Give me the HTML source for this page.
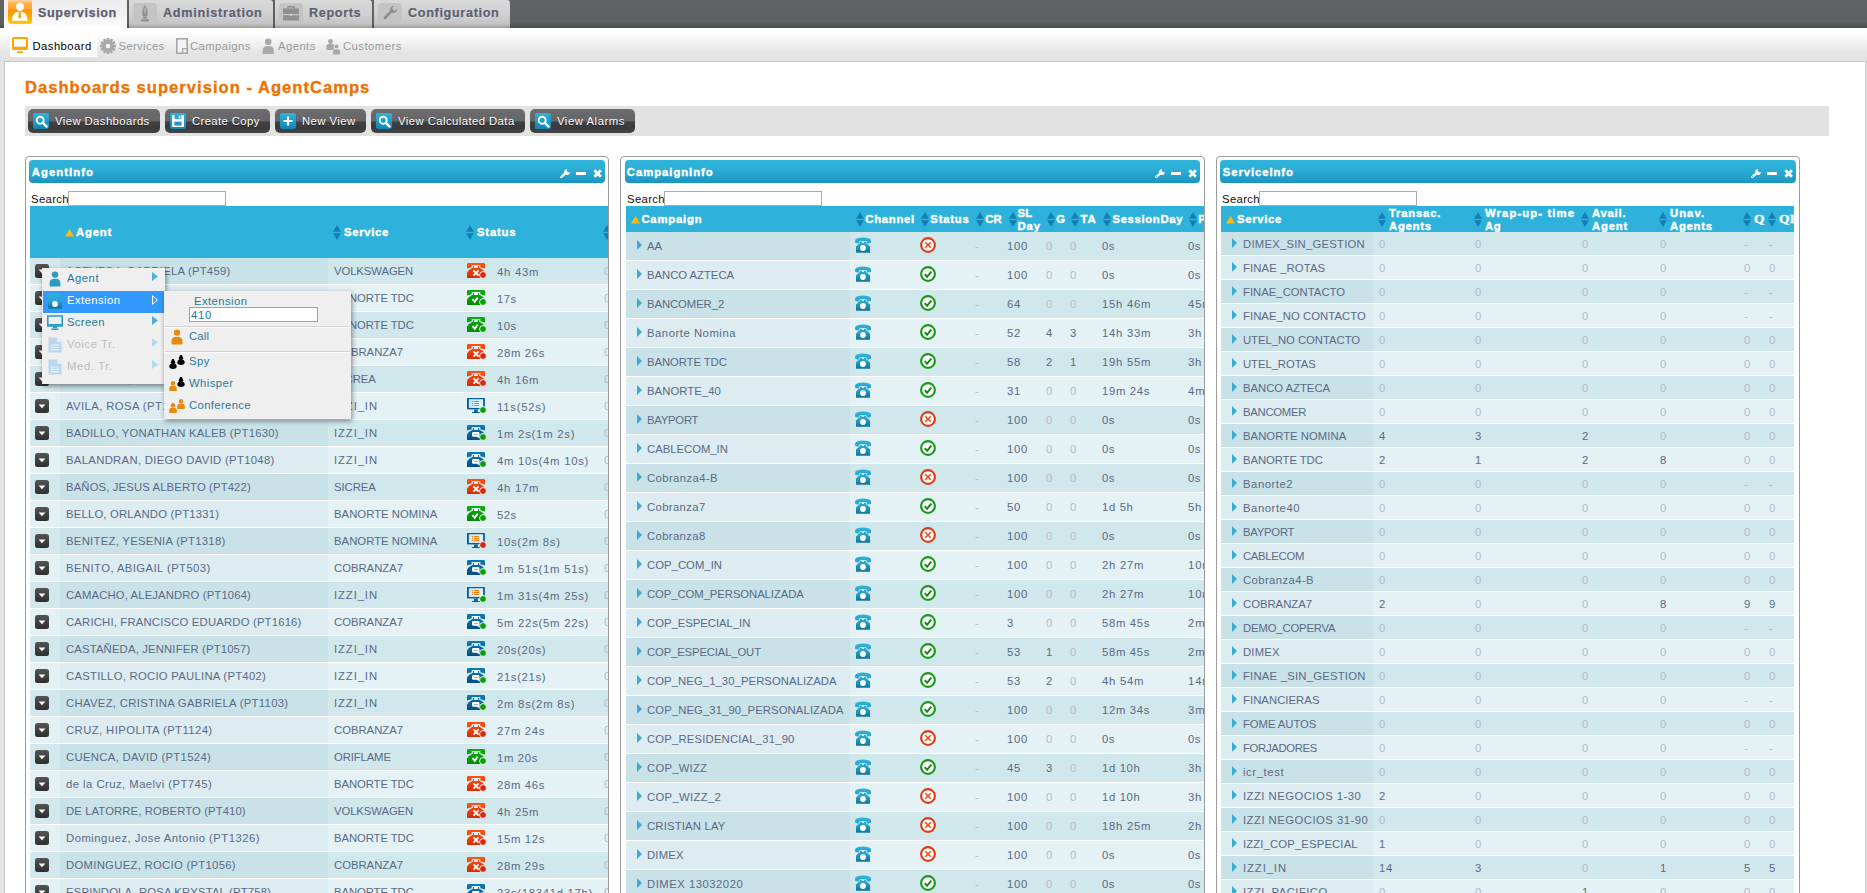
<!DOCTYPE html>
<html><head><meta charset="utf-8"><title>Dashboards supervision - AgentCamps</title>
<style>
*{box-sizing:border-box;margin:0;padding:0}
html,body{width:1867px;height:893px;overflow:hidden;background:#e3e3e3}
body{font-family:"Liberation Sans",sans-serif;font-size:11.5px;color:#5a6a86;position:relative}
svg{display:block;overflow:visible}
.abs{position:absolute}
/* top bar */
#top{position:absolute;left:0;top:0;width:1867px;height:28px;background:linear-gradient(#616266 0,#5f6064 80%,#4a4b4f 100%)}
.tab{position:absolute;top:0;height:28px;border-radius:0 3px 0 0;background:linear-gradient(#d9d9d9 0,#cfcfcf 55%,#c4c4c4 85%,#9c9c9c 100%);}
.tab.sel{background:linear-gradient(#ededee 0,#f1f1f2 55%,#ffffff 100%);border-radius:0}
.tt{position:absolute;-webkit-text-stroke:.25px #5b6072;font-weight:bold;font-size:12.6px;line-height:15px;color:#5b6072;white-space:nowrap;text-shadow:0 1px 0 rgba(255,255,255,.6)}
.tab .ic{position:absolute;top:3px;width:24px;height:21px;border-radius:4px;background:#c4c4c4}
/* sub nav */
#sub{position:absolute;left:0;top:28px;width:1867px;height:34px;background:linear-gradient(#ffffff 0,#fdfdfd 18%,#eeeeee 52%,#e4e4e4 74%,#e2e2e2 100%)}
.it{position:absolute;font-size:11.3px;color:#9a9a9a;white-space:nowrap;line-height:13px}
#sub .sel{position:absolute;left:10px;top:2px;width:87px;height:27px;background:#fff}
/* content */
#content{position:absolute;left:4px;top:61px;width:1862px;height:840px;background:#fff;border:1px solid #c9c9c9}
.h1{position:absolute;-webkit-text-stroke:.35px #ee7203;font-size:16.6px;font-weight:bold;color:#ee7203;white-space:nowrap;line-height:20px}
#toolbar{position:absolute;left:25px;top:106px;width:1804px;height:30px;background:#e2e2e2}
.btn{position:absolute;top:109px;height:24px;border-radius:5px;background:linear-gradient(#6c6c6e 0,#666668 48%,#404042 56%,#3b3b3d 80%,#454547 100%);color:#fff;white-space:nowrap}
.btn .bi{position:absolute;left:5px;top:4px;width:16px;height:16px;border-radius:2px;background:linear-gradient(#2eb3dc 0,#1e9ac6 55%,#1585b0 100%)}
.bt{position:absolute;font-size:11.3px;line-height:13px;color:#fff;white-space:nowrap;text-shadow:0 1px 0 #222}
/* panels */
.panel{position:absolute;top:156px;height:760px;border:1px solid #9c9c9c;border-radius:4px;background:#fff;overflow:hidden}
.ph{position:absolute;left:3px;top:3px;height:23px;border-radius:4px;background:linear-gradient(#2eb3db 0,#2cb0d8 35%,#1f9cc6 85%,#1a94bd 100%)}
.t{position:absolute;-webkit-text-stroke:.4px #fff;font-weight:bold;font-size:11.3px;color:#fff;line-height:13px;white-space:nowrap}
.sl{position:absolute;color:#111;font-size:11.3px;line-height:13px;white-space:nowrap}
.si{position:absolute;top:34px;width:158px;height:15px;border:1px solid #a9adb3;background:#fff}
.tbl{position:absolute;left:4px;top:49px}
.thd{position:absolute;left:0;top:0;background:#2eb2db;}
.th{position:absolute;color:#fff;-webkit-text-stroke:.4px #fff;font-weight:bold;font-size:11.3px;line-height:13px;white-space:nowrap}
.row{position:absolute;left:0}
.c{position:absolute;top:0;height:100%}
.tx{position:absolute;white-space:nowrap;font-size:11.3px;line-height:13px;color:#5a6a86}
.g{color:#b9b8c4}
.o .c{background:#d0e7ec}.o .s{background:#c9e2e8}
.e .c{background:#e4f1f5}.e .s{background:#dcecf1}
.o .f{background:#d3e8ed}.e .f{background:#e3f1f5}
/* menus */
.menu{position:absolute;background:#efefef;box-shadow:1px 2px 5px rgba(0,0,0,.45);}
.mi{position:absolute;left:1px;height:22px;white-space:nowrap}
.mt{position:absolute;font-size:11.3px;line-height:13px;color:#1f7a9c;white-space:nowrap}
.mi.dis .mt{color:#bcbcbc}
.mi.hl{background:#3399ff}.mi.hl .mt{color:#fff}
.sep{position:absolute;left:1px;height:2px;border-top:1px solid #d4d4d4;border-bottom:1px solid #fafafa}
</style></head>
<body>

<svg width="0" height="0" style="position:absolute">
<defs>
<linearGradient id="gR" gradientUnits="userSpaceOnUse" x1="0" y1="0" x2="0" y2="15"><stop offset="0" stop-color="#ff5210"/><stop offset="1" stop-color="#d42c08"/></linearGradient>
<linearGradient id="gG" gradientUnits="userSpaceOnUse" x1="0" y1="0" x2="0" y2="15"><stop offset="0" stop-color="#0bae0b"/><stop offset="1" stop-color="#068806"/></linearGradient>
<linearGradient id="gB" gradientUnits="userSpaceOnUse" x1="0" y1="0" x2="0" y2="15"><stop offset="0" stop-color="#0c7cb6"/><stop offset="1" stop-color="#064c82"/></linearGradient>
<linearGradient id="gT" gradientUnits="userSpaceOnUse" x1="0" y1="0" x2="0" y2="16"><stop offset="0" stop-color="#2eb2da"/><stop offset=".45" stop-color="#28a6ce"/><stop offset="1" stop-color="#10739a"/></linearGradient>
<linearGradient id="gO" x1="0" y1="0" x2="0" y2="1"><stop offset=".1" stop-color="#ffe2c0"/><stop offset=".28" stop-color="#ffad48"/><stop offset=".46" stop-color="#ffa733"/><stop offset=".48" stop-color="#ff9800"/><stop offset=".7" stop-color="#ffa400"/><stop offset=".97" stop-color="#ffc800"/></linearGradient>
<linearGradient id="gK" x1="0" y1="0" x2="0" y2="1"><stop offset="0" stop-color="#555"/><stop offset="1" stop-color="#2e2e2e"/></linearGradient>
<linearGradient id="gScr" x1="0" y1="0" x2="1" y2="1"><stop offset="0" stop-color="#bfe6fa"/><stop offset="1" stop-color="#eaf7ff"/></linearGradient>

<!-- phone body w/ handset -->
<symbol id="ph" viewBox="0 0 18 15.2">
<path d="M0 1.3 Q0 0 1.3 0 H16.7 Q18 0 18 1.3 V5.5 L13.3 4.2 V2.1 H4.7 V4.2 L0 5.5 Z"/>
<path d="M5.9 3.1 H7 V5 H5.9 Z M11 3.1 H12.1 V5 H11 Z"/>
<path d="M5.2 4.9 H12.9 Q16.6 6.4 17.9 9.6 V15.1 H0 V9.6 Q1.4 6.4 5.2 4.9 Z"/>
</symbol>
<symbol id="dotR" viewBox="0 0 8 8"><circle cx="4" cy="4" r="3.45" fill="#d42a0c" stroke="#fff" stroke-width=".9"/></symbol>
<symbol id="dotG" viewBox="0 0 8 8"><circle cx="4" cy="4" r="3.45" fill="#06a006" stroke="#fff" stroke-width=".9"/></symbol>
<symbol id="dotGw" viewBox="0 0 8 8"><circle cx="4" cy="4" r="3.45" fill="#06a006" stroke="#fff" stroke-width=".9"/></symbol>

<symbol id="sRed" viewBox="0 0 20 16">
<use href="#ph" x="0" y="0" width="18" height="15.2" fill="url(#gR)"/>
<path d="M6.5 7.4 L11.6 12.7 M11.6 7.4 L6.5 12.7" stroke="#fff" stroke-width="1.8" fill="none"/>
<use href="#dotR" x="12" y="8" width="8" height="8"/>
</symbol>
<symbol id="sGreen" viewBox="0 0 20 16">
<use href="#ph" x="0" y="0" width="18" height="15.2" fill="url(#gG)"/>
<path d="M5.5 9 L7.7 11.8 L10.7 7.6" stroke="#fff" stroke-width="1.9" fill="none"/>
<use href="#dotGw" x="12" y="8" width="8" height="8"/>
</symbol>
<symbol id="sBlue" viewBox="0 0 20 16">
<use href="#ph" x="0" y="0" width="18" height="15.2" fill="url(#gB)"/>
<path d="M6.4 7.1 H11.2 Q12.5 7.1 12.5 8.4 V10.4 Q12.5 11.7 11.7 11.7 L11.6 13.6 L10 11.7 H6.4 Q5 11.7 5 10.4 V8.4 Q5 7.1 6.4 7.1 Z" fill="#fff"/>
<path d="M7.1 9.5 H11" stroke="#86b4d2" stroke-width="1"/>
<use href="#dotG" x="12" y="8" width="8" height="8"/>
</symbol>
<symbol id="mon" viewBox="0 0 20 16">
<path d="M0 0 H17.9 V11.4 H0 Z" fill="#07609a"/>
<path d="M1.9 1.2 H16.1 V9.9 H1.9 Z" fill="url(#gScr)"/>
<path d="M7.1 11.4 H10.7 V14 H12.8 V15.1 H5 V14 H7.1 Z" fill="#07609a"/>
<path d="M4.9 3.5 H6.1 M4.9 5.5 H6.1 M4.9 7.5 H6.1" stroke="#ff7a0a" stroke-width="1.1"/>
<path d="M7.1 3.5 H12 M7.1 5.5 H12 M7.1 7.5 H12" stroke="#ff7a0a" stroke-width="1.1"/>
</symbol>
<symbol id="sMonG" viewBox="0 0 20 16"><use href="#mon" width="20" height="16"/><use href="#dotG" x="12" y="8" width="8" height="8"/></symbol>
<symbol id="sMonR" viewBox="0 0 20 16"><use href="#mon" width="20" height="16"/><use href="#dotR" x="12" y="8" width="8" height="8"/></symbol>

<!-- teal campaign phone 16x16 -->
<symbol id="tph" viewBox="0 0 16 16">
<path d="M0.1 3.4 Q0.3 2 2 1.5 Q8 -0.5 14 1.5 Q15.8 2 16 3.4 V5.7 L12.5 6.7 L11.6 4.5 Q8 3.3 4.4 4.5 L3.5 6.7 L0.1 5.7 Z" fill="url(#gT)"/>
<path d="M4.9 5 H6.9 V5.9 H9 V5 H11 V5.9 L15.1 9.4 V15.8 H1 V9.4 L4.9 5.9 Z" fill="url(#gT)"/>
<circle cx="7.96" cy="11" r="2.9" fill="#fff"/>
</symbol>
<symbol id="cX" viewBox="0 0 16 16">
<circle cx="8" cy="8" r="6.9" fill="#fff" stroke="#e03a12" stroke-width="2.1"/>
<path d="M5.2 5.2 L10.8 10.8 M10.8 5.2 L5.2 10.8" stroke="#ee4a1a" stroke-width="1.6"/>
</symbol>
<symbol id="cOk" viewBox="0 0 16 16">
<circle cx="8" cy="8" r="6.9" fill="#fff" stroke="#169a16" stroke-width="2.1"/>
<path d="M4.8 8.2 L7.1 10.8 L11.3 5.6" stroke="#118811" stroke-width="2" fill="none"/>
</symbol>
<!-- sort icons -->
<symbol id="sAsc" viewBox="0 0 9 8"><path d="M0 7.6 L4.5 0 L9 7.6 Z" fill="#fdb913"/></symbol>
<symbol id="sBoth" viewBox="0 0 8 15"><path d="M0 6.8 L4 0 L8 6.8 Z M0 8.2 L4 15 L8 8.2 Z" fill="#137fb6"/></symbol>
<!-- expand arrow -->
<symbol id="ex" viewBox="0 0 5 10"><path d="M0 0 L5 5 L0 10 Z" fill="#36acd6"/></symbol>
<!-- row button -->
<symbol id="rb" viewBox="0 0 14 14"><rect x="0" y="0" width="14" height="14" rx="2.5" fill="url(#gK)"/><path d="M3.6 5.6 H10.4 L7 9.2 Z" fill="#fff"/></symbol>
<!-- header tools -->
<symbol id="wr" viewBox="0 0 10 9"><path d="M1.4 7.6 L6.2 3.4" stroke="#fff" stroke-width="2.5" stroke-linecap="round"/><path d="M7.24 0.1 A2.8 2.8 0 1 0 9.8 2.66 L8.3 3.3 L6.7 1.8 Z" fill="#fff"/><circle cx="1.5" cy="7.5" r=".55" fill="#24a2cc"/></symbol>
<symbol id="mn" viewBox="0 0 10 3"><rect width="10" height="3" fill="#fff"/></symbol>
<symbol id="xx" viewBox="0 0 10 10"><path d="M1.4 1.4 L8.6 8.6 M8.6 1.4 L1.4 8.6" stroke="#fff" stroke-width="3.1"/></symbol>
<!-- persons -->
<symbol id="per" viewBox="0 0 12 16"><circle cx="6" cy="3.6" r="3.2"/><path d="M0.6 15.6 V12 Q0.6 7.8 6 7.8 Q11.4 7.8 11.4 12 V15.6 Z"/></symbol>
<symbol id="spy1" viewBox="0 0 8 10"><rect x="2.9" y="0" width="2.2" height="4"/><circle cx="4" cy="3.2" r="2.2"/><path d="M0.3 7.6 Q0.3 4.6 4 4.6 Q7.7 4.6 7.7 7.6 Q7.7 10 4 10 Q0.3 10 0.3 7.6 Z"/></symbol>
<symbol id="psm" viewBox="0 0 8 10"><circle cx="4" cy="2.3" r="2.2"/><path d="M0.2 9.8 V7.4 Q0.2 4.4 4 4.4 Q7.8 4.4 7.8 7.4 V9.8 Q4 10.6 .2 9.8 Z"/></symbol>
<!-- doc icon -->
<symbol id="doc" viewBox="0 0 14 16"><path d="M0.5 0.5 H9 L13.5 5 V15.5 H0.5 Z" fill="#b9d6ee"/><path d="M9 .5 V5 H13.5 Z" fill="#dfeefa"/><path d="M3 8 H11 M3 10.3 H11 M3 12.6 H11" stroke="#e8f3fb" stroke-width="1.2"/></symbol>
<!-- teal monitor for menu -->
<symbol id="tmon" viewBox="0 0 16 16"><path d="M0.8 1 H15.2 V11 H0.8 Z" fill="none" stroke="#2a9cc4" stroke-width="1.6"/><path d="M1.6 9 H14.4 V10.6 H1.6 Z" fill="#2a9cc4"/><path d="M6 11 H10 V13 H6 Z" fill="#2a9cc4"/><path d="M4.6 13.4 H11.4 V15 H4.6 Z" fill="#2a9cc4"/></symbol>
<symbol id="omon" viewBox="0 0 16 17"><rect x="0" y="0" width="16" height="12.9" rx="1.7" fill="#ffa200"/><rect x="2" y="2" width="12" height="7.7" fill="#fff"/><rect x="5" y="14.2" width="5.9" height="1.7" rx=".6" fill="#ffa200"/></symbol>
<symbol id="marr" viewBox="0 0 6 9"><path d="M0 0 L6 4.5 L0 9 Z"/></symbol>
</defs>
</svg>

<div id="top">
<div class="tab sel" style="left:4px;width:123px"><svg class="abs" style="left:4px;top:-1px" width="24" height="25" viewBox="0 0 24 25"><rect x="0" y="-3" width="24" height="28" rx="4" fill="url(#gO)"/><circle cx="12" cy="7.7" r="3.95" fill="#fff"/><path d="M4.1 21.8 Q4.1 12.6 11.8 12.6 Q19.4 12.6 19.4 21.8 Z" fill="#fff"/><path d="M11 12.7 H12.6 L13.4 17.8 L11.8 20.2 L10.2 17.8 Z" fill="#ffa010"/></svg><div class="tt" style="left:34px;top:6px;letter-spacing:0.619px;">Supervision</div></div>
<div class="tab" style="left:129px;width:144px"><div class="ic" style="left:4px"></div><svg class="abs" style="left:10px;top:5px" width="12" height="17" viewBox="0 0 12 17"><path d="M6 0 Q9.6 5 8.4 11 H3.6 Q2.4 5 6 0 Z" fill="#8f8f8f"/><path d="M6 2.5 V8.5" stroke="#c4c4c4" stroke-width="1"/><path d="M4 11.6 H8 V13.6 H4 Z M2.2 14.2 H9.8 V16.4 H2.2 Z" fill="#8f8f8f"/></svg><div class="tt" style="left:34px;top:6px;letter-spacing:0.766px;">Administration</div></div>
<div class="tab" style="left:275px;width:97px"><div class="ic" style="left:4px"></div><svg class="abs" style="left:8px;top:6px" width="16" height="15" viewBox="0 0 16 15"><path d="M5 2.6 V.8 H11 V2.6" fill="none" stroke="#8f8f8f" stroke-width="1.5"/><path d="M0 2.6 H16 V8 H0 Z M0 9.2 H16 V14.6 H0 Z" fill="#8f8f8f"/><rect x="7" y="7.6" width="2" height="2.4" fill="#c8c8c8"/></svg><div class="tt" style="left:34px;top:6px;letter-spacing:0.669px;">Reports</div></div>
<div class="tab" style="left:374px;width:136px"><div class="ic" style="left:4px"></div><svg class="abs" style="left:9px;top:5px" width="15" height="16" viewBox="0 0 11 11"><path d="M10.4 2.6 A3 3 0 0 1 6.4 5.4 L2 9.9 A1 1 0 0 1 0.6 8.5 L5.1 4.1 A3 3 0 0 1 8 .2 L6.6 2.2 L8.3 3.9 Z" fill="#8f8f8f"/></svg><div class="tt" style="left:34px;top:6px;letter-spacing:0.686px;">Configuration</div></div>
</div>
<div id="sub"><div class="sel"></div>
<svg class="abs" style="left:12px;top:9px" width="16" height="17"><use href="#omon" width="16" height="17"/></svg>
<div class="it" style="left:32.5px;top:12px;letter-spacing:0.435px;color:#000">Dashboard</div>
<svg class="abs" style="left:100px;top:10px" width="16" height="16" viewBox="0 0 16 16"><g fill="#a9a9a9"><circle cx="8" cy="8" r="5.8"/><rect x="6.6" y="0" width="2.8" height="16" rx=".6" transform="rotate(0 8 8)"/><rect x="6.6" y="0" width="2.8" height="16" rx=".6" transform="rotate(30 8 8)"/><rect x="6.6" y="0" width="2.8" height="16" rx=".6" transform="rotate(60 8 8)"/><rect x="6.6" y="0" width="2.8" height="16" rx=".6" transform="rotate(90 8 8)"/><rect x="6.6" y="0" width="2.8" height="16" rx=".6" transform="rotate(120 8 8)"/><rect x="6.6" y="0" width="2.8" height="16" rx=".6" transform="rotate(150 8 8)"/></g><circle cx="8" cy="8" r="2.3" fill="#f3f3f3"/></svg>
<div class="it" style="left:118.5px;top:12px;letter-spacing:0.345px;">Services</div>
<svg class="abs" style="left:176px;top:10px" width="12" height="16" viewBox="0 0 12 16"><rect x=".8" y=".8" width="10.4" height="14.4" fill="#f4f4f4" stroke="#a6a6a6" stroke-width="1.6"/><path d="M6.6 14.6 V10.6 H11.2" fill="none" stroke="#a6a6a6" stroke-width="1.4"/></svg>
<div class="it" style="left:190px;top:12px;letter-spacing:0.395px;">Campaigns</div>
<svg class="abs" style="left:261.5px;top:9.5px" width="12.5" height="16.5" fill="#a9a9a9"><use href="#per" width="12.5" height="16.5"/></svg>
<div class="it" style="left:278px;top:12px;letter-spacing:0.433px;">Agents</div>
<svg class="abs" style="left:326px;top:11px" width="9" height="11" fill="#a9a9a9"><use href="#psm" width="9" height="11"/></svg>
<svg class="abs" style="left:332px;top:15.5px" width="9" height="11" fill="#a9a9a9" stroke="#f0f0f0" stroke-width=".8"><use href="#psm" width="9" height="11"/></svg>
<div class="it" style="left:343px;top:12px;letter-spacing:0.461px;">Customers</div>
</div>
<div id="content"></div>
<div class="h1" style="left:25px;top:77.6px;letter-spacing:1.006px;">Dashboards supervision - AgentCamps</div>
<div id="toolbar"></div>
<div class="btn" style="left:28px;width:132px"><div class="bi"><svg class="abs" style="left:2px;top:2px" width="13" height="13" viewBox="0 0 13 13"><circle cx="5.2" cy="5.2" r="3.5" fill="none" stroke="#fff" stroke-width="1.9"/><path d="M7.9 7.9 L11.6 11.6" stroke="#fff" stroke-width="2.3" stroke-linecap="round"/></svg></div><div class="bt" style="left:27px;top:5.8px;letter-spacing:0.423px;">View Dashboards</div></div>
<div class="btn" style="left:165px;width:105px"><div class="bi"><svg class="abs" style="left:2px;top:2px" width="12" height="12" viewBox="0 0 12 12"><path d="M0 1 Q0 0 1 0 H11 Q12 0 12 1 V11 Q12 12 11 12 H1 Q0 12 0 11 Z" fill="#fff"/><rect x="2.6" y="0" width="6.8" height="4" fill="#2aa5d0"/><rect x="6.6" y=".6" width="1.8" height="2.8" fill="#fff"/><rect x="2.4" y="6.6" width="7.2" height="4" fill="#2596c0"/></svg></div><div class="bt" style="left:27px;top:5.8px;letter-spacing:0.387px;">Create Copy</div></div>
<div class="btn" style="left:275px;width:91px"><div class="bi"><svg class="abs" style="left:3px;top:3px" width="10" height="10" viewBox="0 0 10 10"><path d="M5 .5 V9.5 M.5 5 H9.5" stroke="#fff" stroke-width="2.2"/></svg></div><div class="bt" style="left:27px;top:5.8px;letter-spacing:0.431px;">New View</div></div>
<div class="btn" style="left:371px;width:154px"><div class="bi"><svg class="abs" style="left:2px;top:2px" width="13" height="13" viewBox="0 0 13 13"><circle cx="5.2" cy="5.2" r="3.5" fill="none" stroke="#fff" stroke-width="1.9"/><path d="M7.9 7.9 L11.6 11.6" stroke="#fff" stroke-width="2.3" stroke-linecap="round"/></svg></div><div class="bt" style="left:27px;top:5.8px;letter-spacing:0.442px;">View Calculated Data</div></div>
<div class="btn" style="left:530px;width:105px"><div class="bi"><svg class="abs" style="left:2px;top:2px" width="13" height="13" viewBox="0 0 13 13"><circle cx="5.2" cy="5.2" r="3.5" fill="none" stroke="#fff" stroke-width="1.9"/><path d="M7.9 7.9 L11.6 11.6" stroke="#fff" stroke-width="2.3" stroke-linecap="round"/></svg></div><div class="bt" style="left:27px;top:5.8px;letter-spacing:0.541px;">View Alarms</div></div>
<div class="panel" style="left:25px;width:584px">
<div class="ph" style="left:3px;width:576px"><div class="t" style="left:2.8px;top:5.5px;letter-spacing:1.043px;">AgentInfo</div><svg class="abs" style="left:531px;top:9px" width="10" height="9.5"><use href="#wr" width="10" height="9.5"/></svg><svg class="abs" style="left:547px;top:12px" width="10" height="3"><use href="#mn" width="10" height="3"/></svg><svg class="abs" style="left:563.7px;top:9.2px" width="9.3" height="9"><use href="#xx" width="9.3" height="9"/></svg></div>
<div class="sl" style="left:5px;top:36px;letter-spacing:0.349px;">Search</div>
<div class="si" style="left:42px;width:158px"></div>
<div class="tbl">
<div class="thd" style="width:600px;height:52px">
<svg class="abs" style="left:35px;top:22.5px" width="9" height="8"><use href="#sAsc" width="9" height="8"/></svg><div class="th" style="left:46px;top:19.7px;letter-spacing:0.836px;">Agent</div>
<svg class="abs" style="left:303.3px;top:18.8px" width="8" height="15"><use href="#sBoth" width="8" height="15"/></svg><div class="th" style="left:314px;top:19.7px;letter-spacing:0.691px;">Service</div>
<svg class="abs" style="left:436.3px;top:18.8px" width="8" height="15"><use href="#sBoth" width="8" height="15"/></svg><div class="th" style="left:447px;top:19.7px;letter-spacing:0.803px;">Status</div>
<svg class="abs" style="left:573.3px;top:18.8px" width="8" height="15"><use href="#sBoth" width="8" height="15"/></svg>
</div>
<div class="row o" style="top:52px;width:600px;height:26px"><div class="c f" style="left:0;width:30px"></div><div class="c s" style="left:30px;width:268px"></div><div class="c" style="left:298px;width:302px"></div><svg class="abs" style="left:5px;top:6px" width="14" height="14"><use href="#rb" width="14" height="14"/></svg><div class="tx" style="left:36px;top:6.5px;letter-spacing:0.239px;">ACEVES I, GABRIELA (PT459)</div><div class="tx" style="left:304px;top:6.5px;letter-spacing:-0.077px;">VOLKSWAGEN</div><svg class="abs" style="left:437px;top:5px" width="20" height="16"><use href="#sRed" width="20" height="16"/></svg><div class="tx" style="left:467px;top:7.5px;letter-spacing:0.771px;">4h 43m</div><div class="tx g" style="left:574px;top:6.5px;letter-spacing:0.664px;">0</div></div>
<div class="row e" style="top:79px;width:600px;height:26px"><div class="c f" style="left:0;width:30px"></div><div class="c s" style="left:30px;width:268px"></div><div class="c" style="left:298px;width:302px"></div><svg class="abs" style="left:5px;top:6px" width="14" height="14"><use href="#rb" width="14" height="14"/></svg><div class="tx" style="left:36px;top:6.5px;letter-spacing:0.236px;">AGUILAR, MARIA FERNANDA (PT1209)</div><div class="tx" style="left:304px;top:6.5px;letter-spacing:-0.075px;">BANORTE TDC</div><svg class="abs" style="left:437px;top:5px" width="20" height="16"><use href="#sGreen" width="20" height="16"/></svg><div class="tx" style="left:467px;top:7.5px;letter-spacing:0.469px;">17s</div><div class="tx g" style="left:574px;top:6.5px;letter-spacing:0.664px;">0</div></div>
<div class="row o" style="top:106px;width:600px;height:26px"><div class="c f" style="left:0;width:30px"></div><div class="c s" style="left:30px;width:268px"></div><div class="c" style="left:298px;width:302px"></div><svg class="abs" style="left:5px;top:6px" width="14" height="14"><use href="#rb" width="14" height="14"/></svg><div class="tx" style="left:36px;top:6.5px;letter-spacing:0.237px;">ALCANTARA, LUIS ENRIQUE (PT1187)</div><div class="tx" style="left:304px;top:6.5px;letter-spacing:-0.075px;">BANORTE TDC</div><svg class="abs" style="left:437px;top:5px" width="20" height="16"><use href="#sGreen" width="20" height="16"/></svg><div class="tx" style="left:467px;top:7.5px;letter-spacing:0.469px;">10s</div><div class="tx g" style="left:574px;top:6.5px;letter-spacing:0.664px;">0</div></div>
<div class="row e" style="top:133px;width:600px;height:26px"><div class="c f" style="left:0;width:30px"></div><div class="c s" style="left:30px;width:268px"></div><div class="c" style="left:298px;width:302px"></div><svg class="abs" style="left:5px;top:6px" width="14" height="14"><use href="#rb" width="14" height="14"/></svg><div class="tx" style="left:36px;top:6.5px;letter-spacing:0.263px;">ALVAREZ, KARLA IVONNE (PT977)</div><div class="tx" style="left:304px;top:6.5px;letter-spacing:-0.008px;">COBRANZA7</div><svg class="abs" style="left:437px;top:5px" width="20" height="16"><use href="#sRed" width="20" height="16"/></svg><div class="tx" style="left:467px;top:7.5px;letter-spacing:0.672px;">28m 26s</div><div class="tx g" style="left:574px;top:6.5px;letter-spacing:0.664px;">0</div></div>
<div class="row o" style="top:160px;width:600px;height:26px"><div class="c f" style="left:0;width:30px"></div><div class="c s" style="left:30px;width:268px"></div><div class="c" style="left:298px;width:302px"></div><svg class="abs" style="left:5px;top:6px" width="14" height="14"><use href="#rb" width="14" height="14"/></svg><div class="tx" style="left:36px;top:6.5px;letter-spacing:0.21px;">ARELLANO, MONICA (PT631)</div><div class="tx" style="left:304px;top:6.5px;letter-spacing:-0.053px;">SICREA</div><svg class="abs" style="left:437px;top:5px" width="20" height="16"><use href="#sRed" width="20" height="16"/></svg><div class="tx" style="left:467px;top:7.5px;letter-spacing:0.771px;">4h 16m</div><div class="tx g" style="left:574px;top:6.5px;letter-spacing:0.664px;">0</div></div>
<div class="row e" style="top:187px;width:600px;height:26px"><div class="c f" style="left:0;width:30px"></div><div class="c s" style="left:30px;width:268px"></div><div class="c" style="left:298px;width:302px"></div><svg class="abs" style="left:5px;top:6px" width="14" height="14"><use href="#rb" width="14" height="14"/></svg><div class="tx" style="left:36px;top:6.5px;letter-spacing:0.404px;">AVILA, ROSA (PT1412)</div><div class="tx" style="left:304px;top:6.5px;letter-spacing:0.899px;">IZZI_IN</div><svg class="abs" style="left:437px;top:5px" width="20" height="16"><use href="#sMonG" width="20" height="16"/></svg><div class="tx" style="left:467px;top:7.5px;letter-spacing:0.758px;">11s(52s)</div><div class="tx g" style="left:574px;top:6.5px;letter-spacing:0.664px;">0</div></div>
<div class="row o" style="top:214px;width:600px;height:26px"><div class="c f" style="left:0;width:30px"></div><div class="c s" style="left:30px;width:268px"></div><div class="c" style="left:298px;width:302px"></div><svg class="abs" style="left:5px;top:6px" width="14" height="14"><use href="#rb" width="14" height="14"/></svg><div class="tx" style="left:36px;top:6.5px;letter-spacing:0.226px;">BADILLO, YONATHAN KALEB (PT1630)</div><div class="tx" style="left:304px;top:6.5px;letter-spacing:0.899px;">IZZI_IN</div><svg class="abs" style="left:437px;top:5px" width="20" height="16"><use href="#sBlue" width="20" height="16"/></svg><div class="tx" style="left:467px;top:7.5px;letter-spacing:0.761px;">1m 2s(1m 2s)</div><div class="tx g" style="left:574px;top:6.5px;letter-spacing:0.664px;">0</div></div>
<div class="row e" style="top:241px;width:600px;height:26px"><div class="c f" style="left:0;width:30px"></div><div class="c s" style="left:30px;width:268px"></div><div class="c" style="left:298px;width:302px"></div><svg class="abs" style="left:5px;top:6px" width="14" height="14"><use href="#rb" width="14" height="14"/></svg><div class="tx" style="left:36px;top:6.5px;letter-spacing:0.318px;">BALANDRAN, DIEGO DAVID (PT1048)</div><div class="tx" style="left:304px;top:6.5px;letter-spacing:0.899px;">IZZI_IN</div><svg class="abs" style="left:437px;top:5px" width="20" height="16"><use href="#sBlue" width="20" height="16"/></svg><div class="tx" style="left:467px;top:7.5px;letter-spacing:0.749px;">4m 10s(4m 10s)</div><div class="tx g" style="left:574px;top:6.5px;letter-spacing:0.664px;">0</div></div>
<div class="row o" style="top:268px;width:600px;height:26px"><div class="c f" style="left:0;width:30px"></div><div class="c s" style="left:30px;width:268px"></div><div class="c" style="left:298px;width:302px"></div><svg class="abs" style="left:5px;top:6px" width="14" height="14"><use href="#rb" width="14" height="14"/></svg><div class="tx" style="left:36px;top:6.5px;letter-spacing:0.136px;">BAÑOS, JESUS ALBERTO (PT422)</div><div class="tx" style="left:304px;top:6.5px;letter-spacing:-0.053px;">SICREA</div><svg class="abs" style="left:437px;top:5px" width="20" height="16"><use href="#sRed" width="20" height="16"/></svg><div class="tx" style="left:467px;top:7.5px;letter-spacing:0.771px;">4h 17m</div><div class="tx g" style="left:574px;top:6.5px;letter-spacing:0.664px;">0</div></div>
<div class="row e" style="top:295px;width:600px;height:26px"><div class="c f" style="left:0;width:30px"></div><div class="c s" style="left:30px;width:268px"></div><div class="c" style="left:298px;width:302px"></div><svg class="abs" style="left:5px;top:6px" width="14" height="14"><use href="#rb" width="14" height="14"/></svg><div class="tx" style="left:36px;top:6.5px;letter-spacing:0.187px;">BELLO, ORLANDO (PT1331)</div><div class="tx" style="left:304px;top:6.5px;letter-spacing:0.035px;">BANORTE NOMINA</div><svg class="abs" style="left:437px;top:5px" width="20" height="16"><use href="#sGreen" width="20" height="16"/></svg><div class="tx" style="left:467px;top:7.5px;letter-spacing:0.469px;">52s</div><div class="tx g" style="left:574px;top:6.5px;letter-spacing:0.664px;">0</div></div>
<div class="row o" style="top:322px;width:600px;height:26px"><div class="c f" style="left:0;width:30px"></div><div class="c s" style="left:30px;width:268px"></div><div class="c" style="left:298px;width:302px"></div><svg class="abs" style="left:5px;top:6px" width="14" height="14"><use href="#rb" width="14" height="14"/></svg><div class="tx" style="left:36px;top:6.5px;letter-spacing:0.287px;">BENITEZ, YESENIA (PT1318)</div><div class="tx" style="left:304px;top:6.5px;letter-spacing:0.035px;">BANORTE NOMINA</div><svg class="abs" style="left:437px;top:5px" width="20" height="16"><use href="#sMonR" width="20" height="16"/></svg><div class="tx" style="left:467px;top:7.5px;letter-spacing:0.717px;">10s(2m 8s)</div><div class="tx g" style="left:574px;top:6.5px;letter-spacing:0.664px;">0</div></div>
<div class="row e" style="top:349px;width:600px;height:26px"><div class="c f" style="left:0;width:30px"></div><div class="c s" style="left:30px;width:268px"></div><div class="c" style="left:298px;width:302px"></div><svg class="abs" style="left:5px;top:6px" width="14" height="14"><use href="#rb" width="14" height="14"/></svg><div class="tx" style="left:36px;top:6.5px;letter-spacing:0.423px;">BENITO, ABIGAIL (PT503)</div><div class="tx" style="left:304px;top:6.5px;letter-spacing:-0.008px;">COBRANZA7</div><svg class="abs" style="left:437px;top:5px" width="20" height="16"><use href="#sBlue" width="20" height="16"/></svg><div class="tx" style="left:467px;top:7.5px;letter-spacing:0.749px;">1m 51s(1m 51s)</div><div class="tx g" style="left:574px;top:6.5px;letter-spacing:0.664px;">0</div></div>
<div class="row o" style="top:376px;width:600px;height:26px"><div class="c f" style="left:0;width:30px"></div><div class="c s" style="left:30px;width:268px"></div><div class="c" style="left:298px;width:302px"></div><svg class="abs" style="left:5px;top:6px" width="14" height="14"><use href="#rb" width="14" height="14"/></svg><div class="tx" style="left:36px;top:6.5px;letter-spacing:0.13px;">CAMACHO, ALEJANDRO (PT1064)</div><div class="tx" style="left:304px;top:6.5px;letter-spacing:0.899px;">IZZI_IN</div><svg class="abs" style="left:437px;top:5px" width="20" height="16"><use href="#sMonG" width="20" height="16"/></svg><div class="tx" style="left:467px;top:7.5px;letter-spacing:0.749px;">1m 31s(4m 25s)</div><div class="tx g" style="left:574px;top:6.5px;letter-spacing:0.664px;">0</div></div>
<div class="row e" style="top:403px;width:600px;height:26px"><div class="c f" style="left:0;width:30px"></div><div class="c s" style="left:30px;width:268px"></div><div class="c" style="left:298px;width:302px"></div><svg class="abs" style="left:5px;top:6px" width="14" height="14"><use href="#rb" width="14" height="14"/></svg><div class="tx" style="left:36px;top:6.5px;letter-spacing:0.183px;">CARICHI, FRANCISCO EDUARDO (PT1616)</div><div class="tx" style="left:304px;top:6.5px;letter-spacing:-0.008px;">COBRANZA7</div><svg class="abs" style="left:437px;top:5px" width="20" height="16"><use href="#sBlue" width="20" height="16"/></svg><div class="tx" style="left:467px;top:7.5px;letter-spacing:0.749px;">5m 22s(5m 22s)</div><div class="tx g" style="left:574px;top:6.5px;letter-spacing:0.664px;">0</div></div>
<div class="row o" style="top:430px;width:600px;height:26px"><div class="c f" style="left:0;width:30px"></div><div class="c s" style="left:30px;width:268px"></div><div class="c" style="left:298px;width:302px"></div><svg class="abs" style="left:5px;top:6px" width="14" height="14"><use href="#rb" width="14" height="14"/></svg><div class="tx" style="left:36px;top:6.5px;letter-spacing:0.158px;">CASTAÑEDA, JENNIFER (PT1057)</div><div class="tx" style="left:304px;top:6.5px;letter-spacing:0.899px;">IZZI_IN</div><svg class="abs" style="left:437px;top:5px" width="20" height="16"><use href="#sBlue" width="20" height="16"/></svg><div class="tx" style="left:467px;top:7.5px;letter-spacing:0.654px;">20s(20s)</div><div class="tx g" style="left:574px;top:6.5px;letter-spacing:0.664px;">0</div></div>
<div class="row e" style="top:457px;width:600px;height:26px"><div class="c f" style="left:0;width:30px"></div><div class="c s" style="left:30px;width:268px"></div><div class="c" style="left:298px;width:302px"></div><svg class="abs" style="left:5px;top:6px" width="14" height="14"><use href="#rb" width="14" height="14"/></svg><div class="tx" style="left:36px;top:6.5px;letter-spacing:0.262px;">CASTILLO, ROCIO PAULINA (PT402)</div><div class="tx" style="left:304px;top:6.5px;letter-spacing:0.899px;">IZZI_IN</div><svg class="abs" style="left:437px;top:5px" width="20" height="16"><use href="#sBlue" width="20" height="16"/></svg><div class="tx" style="left:467px;top:7.5px;letter-spacing:0.654px;">21s(21s)</div><div class="tx g" style="left:574px;top:6.5px;letter-spacing:0.664px;">0</div></div>
<div class="row o" style="top:484px;width:600px;height:26px"><div class="c f" style="left:0;width:30px"></div><div class="c s" style="left:30px;width:268px"></div><div class="c" style="left:298px;width:302px"></div><svg class="abs" style="left:5px;top:6px" width="14" height="14"><use href="#rb" width="14" height="14"/></svg><div class="tx" style="left:36px;top:6.5px;letter-spacing:0.314px;">CHAVEZ, CRISTINA GABRIELA (PT1103)</div><div class="tx" style="left:304px;top:6.5px;letter-spacing:0.899px;">IZZI_IN</div><svg class="abs" style="left:437px;top:5px" width="20" height="16"><use href="#sBlue" width="20" height="16"/></svg><div class="tx" style="left:467px;top:7.5px;letter-spacing:0.761px;">2m 8s(2m 8s)</div><div class="tx g" style="left:574px;top:6.5px;letter-spacing:0.664px;">0</div></div>
<div class="row e" style="top:511px;width:600px;height:26px"><div class="c f" style="left:0;width:30px"></div><div class="c s" style="left:30px;width:268px"></div><div class="c" style="left:298px;width:302px"></div><svg class="abs" style="left:5px;top:6px" width="14" height="14"><use href="#rb" width="14" height="14"/></svg><div class="tx" style="left:36px;top:6.5px;letter-spacing:0.412px;">CRUZ, HIPOLITA (PT1124)</div><div class="tx" style="left:304px;top:6.5px;letter-spacing:-0.008px;">COBRANZA7</div><svg class="abs" style="left:437px;top:5px" width="20" height="16"><use href="#sRed" width="20" height="16"/></svg><div class="tx" style="left:467px;top:7.5px;letter-spacing:0.672px;">27m 24s</div><div class="tx g" style="left:574px;top:6.5px;letter-spacing:0.664px;">0</div></div>
<div class="row o" style="top:538px;width:600px;height:26px"><div class="c f" style="left:0;width:30px"></div><div class="c s" style="left:30px;width:268px"></div><div class="c" style="left:298px;width:302px"></div><svg class="abs" style="left:5px;top:6px" width="14" height="14"><use href="#rb" width="14" height="14"/></svg><div class="tx" style="left:36px;top:6.5px;letter-spacing:0.329px;">CUENCA, DAVID (PT1524)</div><div class="tx" style="left:304px;top:6.5px;letter-spacing:-0.113px;">ORIFLAME</div><svg class="abs" style="left:437px;top:5px" width="20" height="16"><use href="#sGreen" width="20" height="16"/></svg><div class="tx" style="left:467px;top:7.5px;letter-spacing:0.673px;">1m 20s</div><div class="tx g" style="left:574px;top:6.5px;letter-spacing:0.664px;">0</div></div>
<div class="row e" style="top:565px;width:600px;height:26px"><div class="c f" style="left:0;width:30px"></div><div class="c s" style="left:30px;width:268px"></div><div class="c" style="left:298px;width:302px"></div><svg class="abs" style="left:5px;top:6px" width="14" height="14"><use href="#rb" width="14" height="14"/></svg><div class="tx" style="left:36px;top:6.5px;letter-spacing:0.458px;">de la Cruz, Maelvi (PT745)</div><div class="tx" style="left:304px;top:6.5px;letter-spacing:-0.075px;">BANORTE TDC</div><svg class="abs" style="left:437px;top:5px" width="20" height="16"><use href="#sRed" width="20" height="16"/></svg><div class="tx" style="left:467px;top:7.5px;letter-spacing:0.672px;">28m 46s</div><div class="tx g" style="left:574px;top:6.5px;letter-spacing:0.664px;">0</div></div>
<div class="row o" style="top:592px;width:600px;height:26px"><div class="c f" style="left:0;width:30px"></div><div class="c s" style="left:30px;width:268px"></div><div class="c" style="left:298px;width:302px"></div><svg class="abs" style="left:5px;top:6px" width="14" height="14"><use href="#rb" width="14" height="14"/></svg><div class="tx" style="left:36px;top:6.5px;letter-spacing:0.108px;">DE LATORRE, ROBERTO (PT410)</div><div class="tx" style="left:304px;top:6.5px;letter-spacing:-0.077px;">VOLKSWAGEN</div><svg class="abs" style="left:437px;top:5px" width="20" height="16"><use href="#sRed" width="20" height="16"/></svg><div class="tx" style="left:467px;top:7.5px;letter-spacing:0.771px;">4h 25m</div><div class="tx g" style="left:574px;top:6.5px;letter-spacing:0.664px;">0</div></div>
<div class="row e" style="top:619px;width:600px;height:26px"><div class="c f" style="left:0;width:30px"></div><div class="c s" style="left:30px;width:268px"></div><div class="c" style="left:298px;width:302px"></div><svg class="abs" style="left:5px;top:6px" width="14" height="14"><use href="#rb" width="14" height="14"/></svg><div class="tx" style="left:36px;top:6.5px;letter-spacing:0.493px;">Dominguez, Jose Antonio (PT1326)</div><div class="tx" style="left:304px;top:6.5px;letter-spacing:-0.075px;">BANORTE TDC</div><svg class="abs" style="left:437px;top:5px" width="20" height="16"><use href="#sRed" width="20" height="16"/></svg><div class="tx" style="left:467px;top:7.5px;letter-spacing:0.672px;">15m 12s</div><div class="tx g" style="left:574px;top:6.5px;letter-spacing:0.664px;">0</div></div>
<div class="row o" style="top:646px;width:600px;height:26px"><div class="c f" style="left:0;width:30px"></div><div class="c s" style="left:30px;width:268px"></div><div class="c" style="left:298px;width:302px"></div><svg class="abs" style="left:5px;top:6px" width="14" height="14"><use href="#rb" width="14" height="14"/></svg><div class="tx" style="left:36px;top:6.5px;letter-spacing:0.292px;">DOMINGUEZ, ROCIO (PT1056)</div><div class="tx" style="left:304px;top:6.5px;letter-spacing:-0.008px;">COBRANZA7</div><svg class="abs" style="left:437px;top:5px" width="20" height="16"><use href="#sRed" width="20" height="16"/></svg><div class="tx" style="left:467px;top:7.5px;letter-spacing:0.672px;">28m 29s</div><div class="tx g" style="left:574px;top:6.5px;letter-spacing:0.664px;">0</div></div>
<div class="row e" style="top:673px;width:600px;height:26px"><div class="c f" style="left:0;width:30px"></div><div class="c s" style="left:30px;width:268px"></div><div class="c" style="left:298px;width:302px"></div><svg class="abs" style="left:5px;top:6px" width="14" height="14"><use href="#rb" width="14" height="14"/></svg><div class="tx" style="left:36px;top:6.5px;letter-spacing:0.181px;">ESPINDOLA, ROSA KRYSTAL (PT758)</div><div class="tx" style="left:304px;top:6.5px;letter-spacing:-0.075px;">BANORTE TDC</div><svg class="abs" style="left:437px;top:5px" width="20" height="16"><use href="#sBlue" width="20" height="16"/></svg><div class="tx" style="left:467px;top:7.5px;letter-spacing:0.698px;">23s(18341d 17h)</div><div class="tx g" style="left:574px;top:6.5px;letter-spacing:0.664px;">0</div></div>
<div class="row o" style="top:700px;width:600px;height:26px"><div class="c f" style="left:0;width:30px"></div><div class="c s" style="left:30px;width:268px"></div><div class="c" style="left:298px;width:302px"></div><svg class="abs" style="left:5px;top:6px" width="14" height="14"><use href="#rb" width="14" height="14"/></svg><div class="tx" style="left:36px;top:6.5px;letter-spacing:0.232px;">ESPINOSA, LAURA (PT1290)</div><div class="tx" style="left:304px;top:6.5px;letter-spacing:0.899px;">IZZI_IN</div><svg class="abs" style="left:437px;top:5px" width="20" height="16"><use href="#sBlue" width="20" height="16"/></svg><div class="tx" style="left:467px;top:7.5px;letter-spacing:0.654px;">12s(12s)</div><div class="tx g" style="left:574px;top:6.5px;letter-spacing:0.664px;">0</div></div>
</div></div>
<div class="panel" style="left:620px;width:585px">
<div class="ph" style="left:4px;width:575px"><div class="t" style="left:1.7999999999999998px;top:5.5px;letter-spacing:0.963px;">CampaignInfo</div><svg class="abs" style="left:530px;top:9px" width="10" height="9.5"><use href="#wr" width="10" height="9.5"/></svg><svg class="abs" style="left:546px;top:12px" width="10" height="3"><use href="#mn" width="10" height="3"/></svg><svg class="abs" style="left:562.7px;top:9.2px" width="9.3" height="9"><use href="#xx" width="9.3" height="9"/></svg></div>
<div class="sl" style="left:6px;top:36px;letter-spacing:0.349px;">Search</div>
<div class="si" style="left:43px;width:158px"></div>
<div class="tbl" style="left:5px">
<div class="thd" style="width:600px;height:26px">
<svg class="abs" style="left:4.5px;top:9.5px" width="9" height="8"><use href="#sAsc" width="9" height="8"/></svg><div class="th" style="left:15.4px;top:7px;letter-spacing:0.794px;">Campaign</div>
<svg class="abs" style="left:229.5px;top:6px" width="8" height="15"><use href="#sBoth" width="8" height="15"/></svg><div class="th" style="left:239.3px;top:7px;letter-spacing:0.721px;">Channel</div>
<svg class="abs" style="left:294.5px;top:6px" width="8" height="15"><use href="#sBoth" width="8" height="15"/></svg><div class="th" style="left:304.3px;top:7px;letter-spacing:0.803px;">Status</div>
<svg class="abs" style="left:349.5px;top:6px" width="8" height="15"><use href="#sBoth" width="8" height="15"/></svg><div class="th" style="left:359.3px;top:7px;letter-spacing:0.078px;">CR</div>
<svg class="abs" style="left:420.5px;top:6px" width="8" height="15"><use href="#sBoth" width="8" height="15"/></svg><div class="th" style="left:430.3px;top:7px;letter-spacing:0.08px;">G</div>
<svg class="abs" style="left:444.7px;top:6px" width="8" height="15"><use href="#sBoth" width="8" height="15"/></svg><div class="th" style="left:454.5px;top:7px;letter-spacing:0.862px;">TA</div>
<svg class="abs" style="left:476.7px;top:6px" width="8" height="15"><use href="#sBoth" width="8" height="15"/></svg><div class="th" style="left:486.5px;top:7px;letter-spacing:0.653px;">SessionDay</div>
<svg class="abs" style="left:562.5px;top:6px" width="8" height="15"><use href="#sBoth" width="8" height="15"/></svg><div class="th" style="left:572.3px;top:7px;letter-spacing:0.476px;">P</div>
<svg class="abs" style="left:382.5px;top:6px" width="8" height="15"><use href="#sBoth" width="8" height="15"/></svg><div class="th" style="left:391.5px;top:0.5px;letter-spacing:0.153px;">SL</div><div class="th" style="left:391.5px;top:14.0px;letter-spacing:0.929px;">Day</div>
</div>
<div class="row o" style="top:26px;width:600px;height:28px"><div class="c s" style="left:0;width:224px"></div><div class="c" style="left:224px;width:376px"></div><svg class="abs" style="left:10.5px;top:8px" width="5" height="10"><use href="#ex" width="5" height="10"/></svg><div class="tx" style="left:21px;top:7.5px;letter-spacing:-0.053px;">AA</div><svg class="abs" style="left:229px;top:5px" width="16" height="16"><use href="#tph" width="16" height="16"/></svg><svg class="abs" style="left:293.5px;top:5px" width="16" height="16"><use href="#cX" width="16" height="16"/></svg><div class="tx g" style="left:349px;top:7.5px;letter-spacing:1.203px;">-</div><div class="tx" style="left:381px;top:7.5px;letter-spacing:0.675px;">100</div><div class="tx g" style="left:420px;top:7.5px;letter-spacing:0.664px;">0</div><div class="tx g" style="left:444px;top:7.5px;letter-spacing:0.664px;">0</div><div class="tx" style="left:476px;top:7.5px;letter-spacing:0.363px;">0s</div><div class="tx" style="left:562px;top:7.5px;letter-spacing:0.363px;">0s</div></div>
<div class="row e" style="top:55px;width:600px;height:28px"><div class="c s" style="left:0;width:224px"></div><div class="c" style="left:224px;width:376px"></div><svg class="abs" style="left:10.5px;top:8px" width="5" height="10"><use href="#ex" width="5" height="10"/></svg><div class="tx" style="left:21px;top:7.5px;letter-spacing:-0.017px;">BANCO AZTECA</div><svg class="abs" style="left:229px;top:5px" width="16" height="16"><use href="#tph" width="16" height="16"/></svg><svg class="abs" style="left:293.5px;top:5px" width="16" height="16"><use href="#cOk" width="16" height="16"/></svg><div class="tx g" style="left:349px;top:7.5px;letter-spacing:1.203px;">-</div><div class="tx" style="left:381px;top:7.5px;letter-spacing:0.675px;">100</div><div class="tx g" style="left:420px;top:7.5px;letter-spacing:0.664px;">0</div><div class="tx g" style="left:444px;top:7.5px;letter-spacing:0.664px;">0</div><div class="tx" style="left:476px;top:7.5px;letter-spacing:0.363px;">0s</div><div class="tx" style="left:562px;top:7.5px;letter-spacing:0.363px;">0s</div></div>
<div class="row o" style="top:84px;width:600px;height:28px"><div class="c s" style="left:0;width:224px"></div><div class="c" style="left:224px;width:376px"></div><svg class="abs" style="left:10.5px;top:8px" width="5" height="10"><use href="#ex" width="5" height="10"/></svg><div class="tx" style="left:21px;top:7.5px;letter-spacing:-0.074px;">BANCOMER_2</div><svg class="abs" style="left:229px;top:5px" width="16" height="16"><use href="#tph" width="16" height="16"/></svg><svg class="abs" style="left:293.5px;top:5px" width="16" height="16"><use href="#cOk" width="16" height="16"/></svg><div class="tx g" style="left:349px;top:7.5px;letter-spacing:1.203px;">-</div><div class="tx" style="left:381px;top:7.5px;letter-spacing:0.672px;">64</div><div class="tx g" style="left:420px;top:7.5px;letter-spacing:0.664px;">0</div><div class="tx g" style="left:444px;top:7.5px;letter-spacing:0.664px;">0</div><div class="tx" style="left:476px;top:7.5px;letter-spacing:0.758px;">15h 46m</div><div class="tx" style="left:562px;top:7.5px;letter-spacing:0.862px;">45m</div></div>
<div class="row e" style="top:113px;width:600px;height:28px"><div class="c s" style="left:0;width:224px"></div><div class="c" style="left:224px;width:376px"></div><svg class="abs" style="left:10.5px;top:8px" width="5" height="10"><use href="#ex" width="5" height="10"/></svg><div class="tx" style="left:21px;top:7.5px;letter-spacing:0.526px;">Banorte Nomina</div><svg class="abs" style="left:229px;top:5px" width="16" height="16"><use href="#tph" width="16" height="16"/></svg><svg class="abs" style="left:293.5px;top:5px" width="16" height="16"><use href="#cOk" width="16" height="16"/></svg><div class="tx g" style="left:349px;top:7.5px;letter-spacing:1.203px;">-</div><div class="tx" style="left:381px;top:7.5px;letter-spacing:0.672px;">52</div><div class="tx" style="left:420px;top:7.5px;letter-spacing:0.664px;">4</div><div class="tx" style="left:444px;top:7.5px;letter-spacing:0.664px;">3</div><div class="tx" style="left:476px;top:7.5px;letter-spacing:0.758px;">14h 33m</div><div class="tx" style="left:562px;top:7.5px;letter-spacing:0.656px;">3h</div></div>
<div class="row o" style="top:142px;width:600px;height:28px"><div class="c s" style="left:0;width:224px"></div><div class="c" style="left:224px;width:376px"></div><svg class="abs" style="left:10.5px;top:8px" width="5" height="10"><use href="#ex" width="5" height="10"/></svg><div class="tx" style="left:21px;top:7.5px;letter-spacing:-0.075px;">BANORTE TDC</div><svg class="abs" style="left:229px;top:5px" width="16" height="16"><use href="#tph" width="16" height="16"/></svg><svg class="abs" style="left:293.5px;top:5px" width="16" height="16"><use href="#cOk" width="16" height="16"/></svg><div class="tx g" style="left:349px;top:7.5px;letter-spacing:1.203px;">-</div><div class="tx" style="left:381px;top:7.5px;letter-spacing:0.672px;">58</div><div class="tx" style="left:420px;top:7.5px;letter-spacing:0.664px;">2</div><div class="tx" style="left:444px;top:7.5px;letter-spacing:0.664px;">1</div><div class="tx" style="left:476px;top:7.5px;letter-spacing:0.758px;">19h 55m</div><div class="tx" style="left:562px;top:7.5px;letter-spacing:0.656px;">3h</div></div>
<div class="row e" style="top:171px;width:600px;height:28px"><div class="c s" style="left:0;width:224px"></div><div class="c" style="left:224px;width:376px"></div><svg class="abs" style="left:10.5px;top:8px" width="5" height="10"><use href="#ex" width="5" height="10"/></svg><div class="tx" style="left:21px;top:7.5px;letter-spacing:0.068px;">BANORTE_40</div><svg class="abs" style="left:229px;top:5px" width="16" height="16"><use href="#tph" width="16" height="16"/></svg><svg class="abs" style="left:293.5px;top:5px" width="16" height="16"><use href="#cOk" width="16" height="16"/></svg><div class="tx g" style="left:349px;top:7.5px;letter-spacing:1.203px;">-</div><div class="tx" style="left:381px;top:7.5px;letter-spacing:0.672px;">31</div><div class="tx g" style="left:420px;top:7.5px;letter-spacing:0.664px;">0</div><div class="tx g" style="left:444px;top:7.5px;letter-spacing:0.664px;">0</div><div class="tx" style="left:476px;top:7.5px;letter-spacing:0.672px;">19m 24s</div><div class="tx" style="left:562px;top:7.5px;letter-spacing:0.954px;">4m</div></div>
<div class="row o" style="top:200px;width:600px;height:28px"><div class="c s" style="left:0;width:224px"></div><div class="c" style="left:224px;width:376px"></div><svg class="abs" style="left:10.5px;top:8px" width="5" height="10"><use href="#ex" width="5" height="10"/></svg><div class="tx" style="left:21px;top:7.5px;letter-spacing:-0.238px;">BAYPORT</div><svg class="abs" style="left:229px;top:5px" width="16" height="16"><use href="#tph" width="16" height="16"/></svg><svg class="abs" style="left:293.5px;top:5px" width="16" height="16"><use href="#cX" width="16" height="16"/></svg><div class="tx g" style="left:349px;top:7.5px;letter-spacing:1.203px;">-</div><div class="tx" style="left:381px;top:7.5px;letter-spacing:0.675px;">100</div><div class="tx g" style="left:420px;top:7.5px;letter-spacing:0.664px;">0</div><div class="tx g" style="left:444px;top:7.5px;letter-spacing:0.664px;">0</div><div class="tx" style="left:476px;top:7.5px;letter-spacing:0.363px;">0s</div><div class="tx" style="left:562px;top:7.5px;letter-spacing:0.363px;">0s</div></div>
<div class="row e" style="top:229px;width:600px;height:28px"><div class="c s" style="left:0;width:224px"></div><div class="c" style="left:224px;width:376px"></div><svg class="abs" style="left:10.5px;top:8px" width="5" height="10"><use href="#ex" width="5" height="10"/></svg><div class="tx" style="left:21px;top:7.5px;letter-spacing:-0.009px;">CABLECOM_IN</div><svg class="abs" style="left:229px;top:5px" width="16" height="16"><use href="#tph" width="16" height="16"/></svg><svg class="abs" style="left:293.5px;top:5px" width="16" height="16"><use href="#cOk" width="16" height="16"/></svg><div class="tx g" style="left:349px;top:7.5px;letter-spacing:1.203px;">-</div><div class="tx" style="left:381px;top:7.5px;letter-spacing:0.675px;">100</div><div class="tx g" style="left:420px;top:7.5px;letter-spacing:0.664px;">0</div><div class="tx g" style="left:444px;top:7.5px;letter-spacing:0.664px;">0</div><div class="tx" style="left:476px;top:7.5px;letter-spacing:0.363px;">0s</div><div class="tx" style="left:562px;top:7.5px;letter-spacing:0.363px;">0s</div></div>
<div class="row o" style="top:258px;width:600px;height:28px"><div class="c s" style="left:0;width:224px"></div><div class="c" style="left:224px;width:376px"></div><svg class="abs" style="left:10.5px;top:8px" width="5" height="10"><use href="#ex" width="5" height="10"/></svg><div class="tx" style="left:21px;top:7.5px;letter-spacing:0.407px;">Cobranza4-B</div><svg class="abs" style="left:229px;top:5px" width="16" height="16"><use href="#tph" width="16" height="16"/></svg><svg class="abs" style="left:293.5px;top:5px" width="16" height="16"><use href="#cX" width="16" height="16"/></svg><div class="tx g" style="left:349px;top:7.5px;letter-spacing:1.203px;">-</div><div class="tx" style="left:381px;top:7.5px;letter-spacing:0.675px;">100</div><div class="tx g" style="left:420px;top:7.5px;letter-spacing:0.664px;">0</div><div class="tx g" style="left:444px;top:7.5px;letter-spacing:0.664px;">0</div><div class="tx" style="left:476px;top:7.5px;letter-spacing:0.363px;">0s</div><div class="tx" style="left:562px;top:7.5px;letter-spacing:0.363px;">0s</div></div>
<div class="row e" style="top:287px;width:600px;height:28px"><div class="c s" style="left:0;width:224px"></div><div class="c" style="left:224px;width:376px"></div><svg class="abs" style="left:10.5px;top:8px" width="5" height="10"><use href="#ex" width="5" height="10"/></svg><div class="tx" style="left:21px;top:7.5px;letter-spacing:0.367px;">Cobranza7</div><svg class="abs" style="left:229px;top:5px" width="16" height="16"><use href="#tph" width="16" height="16"/></svg><svg class="abs" style="left:293.5px;top:5px" width="16" height="16"><use href="#cOk" width="16" height="16"/></svg><div class="tx g" style="left:349px;top:7.5px;letter-spacing:1.203px;">-</div><div class="tx" style="left:381px;top:7.5px;letter-spacing:0.672px;">50</div><div class="tx g" style="left:420px;top:7.5px;letter-spacing:0.664px;">0</div><div class="tx g" style="left:444px;top:7.5px;letter-spacing:0.664px;">0</div><div class="tx" style="left:476px;top:7.5px;letter-spacing:0.648px;">1d 5h</div><div class="tx" style="left:562px;top:7.5px;letter-spacing:0.656px;">5h</div></div>
<div class="row o" style="top:316px;width:600px;height:28px"><div class="c s" style="left:0;width:224px"></div><div class="c" style="left:224px;width:376px"></div><svg class="abs" style="left:10.5px;top:8px" width="5" height="10"><use href="#ex" width="5" height="10"/></svg><div class="tx" style="left:21px;top:7.5px;letter-spacing:0.367px;">Cobranza8</div><svg class="abs" style="left:229px;top:5px" width="16" height="16"><use href="#tph" width="16" height="16"/></svg><svg class="abs" style="left:293.5px;top:5px" width="16" height="16"><use href="#cX" width="16" height="16"/></svg><div class="tx g" style="left:349px;top:7.5px;letter-spacing:1.203px;">-</div><div class="tx" style="left:381px;top:7.5px;letter-spacing:0.675px;">100</div><div class="tx g" style="left:420px;top:7.5px;letter-spacing:0.664px;">0</div><div class="tx g" style="left:444px;top:7.5px;letter-spacing:0.664px;">0</div><div class="tx" style="left:476px;top:7.5px;letter-spacing:0.363px;">0s</div><div class="tx" style="left:562px;top:7.5px;letter-spacing:0.363px;">0s</div></div>
<div class="row e" style="top:345px;width:600px;height:28px"><div class="c s" style="left:0;width:224px"></div><div class="c" style="left:224px;width:376px"></div><svg class="abs" style="left:10.5px;top:8px" width="5" height="10"><use href="#ex" width="5" height="10"/></svg><div class="tx" style="left:21px;top:7.5px;letter-spacing:0.035px;">COP_COM_IN</div><svg class="abs" style="left:229px;top:5px" width="16" height="16"><use href="#tph" width="16" height="16"/></svg><svg class="abs" style="left:293.5px;top:5px" width="16" height="16"><use href="#cOk" width="16" height="16"/></svg><div class="tx g" style="left:349px;top:7.5px;letter-spacing:1.203px;">-</div><div class="tx" style="left:381px;top:7.5px;letter-spacing:0.675px;">100</div><div class="tx g" style="left:420px;top:7.5px;letter-spacing:0.664px;">0</div><div class="tx g" style="left:444px;top:7.5px;letter-spacing:0.664px;">0</div><div class="tx" style="left:476px;top:7.5px;letter-spacing:0.771px;">2h 27m</div><div class="tx" style="left:562px;top:7.5px;letter-spacing:0.862px;">10m</div></div>
<div class="row o" style="top:374px;width:600px;height:28px"><div class="c s" style="left:0;width:224px"></div><div class="c" style="left:224px;width:376px"></div><svg class="abs" style="left:10.5px;top:8px" width="5" height="10"><use href="#ex" width="5" height="10"/></svg><div class="tx" style="left:21px;top:7.5px;letter-spacing:-0.068px;">COP_COM_PERSONALIZADA</div><svg class="abs" style="left:229px;top:5px" width="16" height="16"><use href="#tph" width="16" height="16"/></svg><svg class="abs" style="left:293.5px;top:5px" width="16" height="16"><use href="#cOk" width="16" height="16"/></svg><div class="tx g" style="left:349px;top:7.5px;letter-spacing:1.203px;">-</div><div class="tx" style="left:381px;top:7.5px;letter-spacing:0.675px;">100</div><div class="tx g" style="left:420px;top:7.5px;letter-spacing:0.664px;">0</div><div class="tx g" style="left:444px;top:7.5px;letter-spacing:0.664px;">0</div><div class="tx" style="left:476px;top:7.5px;letter-spacing:0.771px;">2h 27m</div><div class="tx" style="left:562px;top:7.5px;letter-spacing:0.862px;">10m</div></div>
<div class="row e" style="top:403px;width:600px;height:28px"><div class="c s" style="left:0;width:224px"></div><div class="c" style="left:224px;width:376px"></div><svg class="abs" style="left:10.5px;top:8px" width="5" height="10"><use href="#ex" width="5" height="10"/></svg><div class="tx" style="left:21px;top:7.5px;letter-spacing:-0.019px;">COP_ESPECIAL_IN</div><svg class="abs" style="left:229px;top:5px" width="16" height="16"><use href="#tph" width="16" height="16"/></svg><svg class="abs" style="left:293.5px;top:5px" width="16" height="16"><use href="#cOk" width="16" height="16"/></svg><div class="tx g" style="left:349px;top:7.5px;letter-spacing:1.203px;">-</div><div class="tx" style="left:381px;top:7.5px;letter-spacing:0.664px;">3</div><div class="tx g" style="left:420px;top:7.5px;letter-spacing:0.664px;">0</div><div class="tx g" style="left:444px;top:7.5px;letter-spacing:0.664px;">0</div><div class="tx" style="left:476px;top:7.5px;letter-spacing:0.672px;">58m 45s</div><div class="tx" style="left:562px;top:7.5px;letter-spacing:0.954px;">2m</div></div>
<div class="row o" style="top:432px;width:600px;height:28px"><div class="c s" style="left:0;width:224px"></div><div class="c" style="left:224px;width:376px"></div><svg class="abs" style="left:10.5px;top:8px" width="5" height="10"><use href="#ex" width="5" height="10"/></svg><div class="tx" style="left:21px;top:7.5px;letter-spacing:-0.141px;">COP_ESPECIAL_OUT</div><svg class="abs" style="left:229px;top:5px" width="16" height="16"><use href="#tph" width="16" height="16"/></svg><svg class="abs" style="left:293.5px;top:5px" width="16" height="16"><use href="#cOk" width="16" height="16"/></svg><div class="tx g" style="left:349px;top:7.5px;letter-spacing:1.203px;">-</div><div class="tx" style="left:381px;top:7.5px;letter-spacing:0.672px;">53</div><div class="tx" style="left:420px;top:7.5px;letter-spacing:0.664px;">1</div><div class="tx g" style="left:444px;top:7.5px;letter-spacing:0.664px;">0</div><div class="tx" style="left:476px;top:7.5px;letter-spacing:0.672px;">58m 45s</div><div class="tx" style="left:562px;top:7.5px;letter-spacing:0.954px;">2m</div></div>
<div class="row e" style="top:461px;width:600px;height:28px"><div class="c s" style="left:0;width:224px"></div><div class="c" style="left:224px;width:376px"></div><svg class="abs" style="left:10.5px;top:8px" width="5" height="10"><use href="#ex" width="5" height="10"/></svg><div class="tx" style="left:21px;top:7.5px;letter-spacing:0.075px;">COP_NEG_1_30_PERSONALIZADA</div><svg class="abs" style="left:229px;top:5px" width="16" height="16"><use href="#tph" width="16" height="16"/></svg><svg class="abs" style="left:293.5px;top:5px" width="16" height="16"><use href="#cOk" width="16" height="16"/></svg><div class="tx g" style="left:349px;top:7.5px;letter-spacing:1.203px;">-</div><div class="tx" style="left:381px;top:7.5px;letter-spacing:0.672px;">53</div><div class="tx" style="left:420px;top:7.5px;letter-spacing:0.664px;">2</div><div class="tx g" style="left:444px;top:7.5px;letter-spacing:0.664px;">0</div><div class="tx" style="left:476px;top:7.5px;letter-spacing:0.771px;">4h 54m</div><div class="tx" style="left:562px;top:7.5px;letter-spacing:0.862px;">14m</div></div>
<div class="row o" style="top:490px;width:600px;height:28px"><div class="c s" style="left:0;width:224px"></div><div class="c" style="left:224px;width:376px"></div><svg class="abs" style="left:10.5px;top:8px" width="5" height="10"><use href="#ex" width="5" height="10"/></svg><div class="tx" style="left:21px;top:7.5px;letter-spacing:0.097px;">COP_NEG_31_90_PERSONALIZADA</div><svg class="abs" style="left:229px;top:5px" width="16" height="16"><use href="#tph" width="16" height="16"/></svg><svg class="abs" style="left:293.5px;top:5px" width="16" height="16"><use href="#cOk" width="16" height="16"/></svg><div class="tx g" style="left:349px;top:7.5px;letter-spacing:1.203px;">-</div><div class="tx" style="left:381px;top:7.5px;letter-spacing:0.675px;">100</div><div class="tx g" style="left:420px;top:7.5px;letter-spacing:0.664px;">0</div><div class="tx g" style="left:444px;top:7.5px;letter-spacing:0.664px;">0</div><div class="tx" style="left:476px;top:7.5px;letter-spacing:0.672px;">12m 34s</div><div class="tx" style="left:562px;top:7.5px;letter-spacing:0.954px;">3m</div></div>
<div class="row e" style="top:519px;width:600px;height:28px"><div class="c s" style="left:0;width:224px"></div><div class="c" style="left:224px;width:376px"></div><svg class="abs" style="left:10.5px;top:8px" width="5" height="10"><use href="#ex" width="5" height="10"/></svg><div class="tx" style="left:21px;top:7.5px;letter-spacing:0.18px;">COP_RESIDENCIAL_31_90</div><svg class="abs" style="left:229px;top:5px" width="16" height="16"><use href="#tph" width="16" height="16"/></svg><svg class="abs" style="left:293.5px;top:5px" width="16" height="16"><use href="#cX" width="16" height="16"/></svg><div class="tx g" style="left:349px;top:7.5px;letter-spacing:1.203px;">-</div><div class="tx" style="left:381px;top:7.5px;letter-spacing:0.675px;">100</div><div class="tx g" style="left:420px;top:7.5px;letter-spacing:0.664px;">0</div><div class="tx g" style="left:444px;top:7.5px;letter-spacing:0.664px;">0</div><div class="tx" style="left:476px;top:7.5px;letter-spacing:0.363px;">0s</div><div class="tx" style="left:562px;top:7.5px;letter-spacing:0.363px;">0s</div></div>
<div class="row o" style="top:548px;width:600px;height:28px"><div class="c s" style="left:0;width:224px"></div><div class="c" style="left:224px;width:376px"></div><svg class="abs" style="left:10.5px;top:8px" width="5" height="10"><use href="#ex" width="5" height="10"/></svg><div class="tx" style="left:21px;top:7.5px;letter-spacing:0.233px;">COP_WIZZ</div><svg class="abs" style="left:229px;top:5px" width="16" height="16"><use href="#tph" width="16" height="16"/></svg><svg class="abs" style="left:293.5px;top:5px" width="16" height="16"><use href="#cOk" width="16" height="16"/></svg><div class="tx g" style="left:349px;top:7.5px;letter-spacing:1.203px;">-</div><div class="tx" style="left:381px;top:7.5px;letter-spacing:0.672px;">45</div><div class="tx" style="left:420px;top:7.5px;letter-spacing:0.664px;">3</div><div class="tx g" style="left:444px;top:7.5px;letter-spacing:0.664px;">0</div><div class="tx" style="left:476px;top:7.5px;letter-spacing:0.653px;">1d 10h</div><div class="tx" style="left:562px;top:7.5px;letter-spacing:0.656px;">3h</div></div>
<div class="row e" style="top:577px;width:600px;height:28px"><div class="c s" style="left:0;width:224px"></div><div class="c" style="left:224px;width:376px"></div><svg class="abs" style="left:10.5px;top:8px" width="5" height="10"><use href="#ex" width="5" height="10"/></svg><div class="tx" style="left:21px;top:7.5px;letter-spacing:0.323px;">COP_WIZZ_2</div><svg class="abs" style="left:229px;top:5px" width="16" height="16"><use href="#tph" width="16" height="16"/></svg><svg class="abs" style="left:293.5px;top:5px" width="16" height="16"><use href="#cX" width="16" height="16"/></svg><div class="tx g" style="left:349px;top:7.5px;letter-spacing:1.203px;">-</div><div class="tx" style="left:381px;top:7.5px;letter-spacing:0.675px;">100</div><div class="tx g" style="left:420px;top:7.5px;letter-spacing:0.664px;">0</div><div class="tx g" style="left:444px;top:7.5px;letter-spacing:0.664px;">0</div><div class="tx" style="left:476px;top:7.5px;letter-spacing:0.653px;">1d 10h</div><div class="tx" style="left:562px;top:7.5px;letter-spacing:0.656px;">3h</div></div>
<div class="row o" style="top:606px;width:600px;height:28px"><div class="c s" style="left:0;width:224px"></div><div class="c" style="left:224px;width:376px"></div><svg class="abs" style="left:10.5px;top:8px" width="5" height="10"><use href="#ex" width="5" height="10"/></svg><div class="tx" style="left:21px;top:7.5px;letter-spacing:0.178px;">CRISTIAN LAY</div><svg class="abs" style="left:229px;top:5px" width="16" height="16"><use href="#tph" width="16" height="16"/></svg><svg class="abs" style="left:293.5px;top:5px" width="16" height="16"><use href="#cX" width="16" height="16"/></svg><div class="tx g" style="left:349px;top:7.5px;letter-spacing:1.203px;">-</div><div class="tx" style="left:381px;top:7.5px;letter-spacing:0.675px;">100</div><div class="tx g" style="left:420px;top:7.5px;letter-spacing:0.664px;">0</div><div class="tx g" style="left:444px;top:7.5px;letter-spacing:0.664px;">0</div><div class="tx" style="left:476px;top:7.5px;letter-spacing:0.758px;">18h 25m</div><div class="tx" style="left:562px;top:7.5px;letter-spacing:0.656px;">2h</div></div>
<div class="row e" style="top:635px;width:600px;height:28px"><div class="c s" style="left:0;width:224px"></div><div class="c" style="left:224px;width:376px"></div><svg class="abs" style="left:10.5px;top:8px" width="5" height="10"><use href="#ex" width="5" height="10"/></svg><div class="tx" style="left:21px;top:7.5px;letter-spacing:0.181px;">DIMEX</div><svg class="abs" style="left:229px;top:5px" width="16" height="16"><use href="#tph" width="16" height="16"/></svg><svg class="abs" style="left:293.5px;top:5px" width="16" height="16"><use href="#cX" width="16" height="16"/></svg><div class="tx g" style="left:349px;top:7.5px;letter-spacing:1.203px;">-</div><div class="tx" style="left:381px;top:7.5px;letter-spacing:0.675px;">100</div><div class="tx g" style="left:420px;top:7.5px;letter-spacing:0.664px;">0</div><div class="tx g" style="left:444px;top:7.5px;letter-spacing:0.664px;">0</div><div class="tx" style="left:476px;top:7.5px;letter-spacing:0.363px;">0s</div><div class="tx" style="left:562px;top:7.5px;letter-spacing:0.363px;">0s</div></div>
<div class="row o" style="top:664px;width:600px;height:28px"><div class="c s" style="left:0;width:224px"></div><div class="c" style="left:224px;width:376px"></div><svg class="abs" style="left:10.5px;top:8px" width="5" height="10"><use href="#ex" width="5" height="10"/></svg><div class="tx" style="left:21px;top:7.5px;letter-spacing:0.503px;">DIMEX 13032020</div><svg class="abs" style="left:229px;top:5px" width="16" height="16"><use href="#tph" width="16" height="16"/></svg><svg class="abs" style="left:293.5px;top:5px" width="16" height="16"><use href="#cOk" width="16" height="16"/></svg><div class="tx g" style="left:349px;top:7.5px;letter-spacing:1.203px;">-</div><div class="tx" style="left:381px;top:7.5px;letter-spacing:0.675px;">100</div><div class="tx g" style="left:420px;top:7.5px;letter-spacing:0.664px;">0</div><div class="tx g" style="left:444px;top:7.5px;letter-spacing:0.664px;">0</div><div class="tx" style="left:476px;top:7.5px;letter-spacing:0.363px;">0s</div><div class="tx" style="left:562px;top:7.5px;letter-spacing:0.363px;">0s</div></div>
<div class="row e" style="top:693px;width:600px;height:28px"><div class="c s" style="left:0;width:224px"></div><div class="c" style="left:224px;width:376px"></div><svg class="abs" style="left:10.5px;top:8px" width="5" height="10"><use href="#ex" width="5" height="10"/></svg><div class="tx" style="left:21px;top:7.5px;letter-spacing:0.324px;">DIMEX_2</div><svg class="abs" style="left:229px;top:5px" width="16" height="16"><use href="#tph" width="16" height="16"/></svg><svg class="abs" style="left:293.5px;top:5px" width="16" height="16"><use href="#cOk" width="16" height="16"/></svg><div class="tx g" style="left:349px;top:7.5px;letter-spacing:1.203px;">-</div><div class="tx" style="left:381px;top:7.5px;letter-spacing:0.675px;">100</div><div class="tx g" style="left:420px;top:7.5px;letter-spacing:0.664px;">0</div><div class="tx g" style="left:444px;top:7.5px;letter-spacing:0.664px;">0</div><div class="tx" style="left:476px;top:7.5px;letter-spacing:0.363px;">0s</div><div class="tx" style="left:562px;top:7.5px;letter-spacing:0.363px;">0s</div></div>
</div></div>
<div class="panel" style="left:1216px;width:584px">
<div class="ph" style="left:3px;width:576px"><div class="t" style="left:2.8px;top:5.5px;letter-spacing:0.913px;">ServiceInfo</div><svg class="abs" style="left:531px;top:9px" width="10" height="9.5"><use href="#wr" width="10" height="9.5"/></svg><svg class="abs" style="left:547px;top:12px" width="10" height="3"><use href="#mn" width="10" height="3"/></svg><svg class="abs" style="left:563.7px;top:9.2px" width="9.3" height="9"><use href="#xx" width="9.3" height="9"/></svg></div>
<div class="sl" style="left:5px;top:36px;letter-spacing:0.349px;">Search</div>
<div class="si" style="left:42px;width:158px"></div>
<div class="tbl">
<div class="thd" style="width:573px;height:26px">
<svg class="abs" style="left:5px;top:9.5px" width="9" height="8"><use href="#sAsc" width="9" height="8"/></svg><div class="th" style="left:16px;top:7px;letter-spacing:0.691px;">Service</div>
<svg class="abs" style="left:157px;top:6px" width="8" height="15"><use href="#sBoth" width="8" height="15"/></svg><div class="th" style="left:168px;top:1px;letter-spacing:0.792px;">Transac.</div><div class="th" style="left:168px;top:14px;letter-spacing:0.731px;">Agents</div>
<svg class="abs" style="left:253px;top:6px" width="8" height="15"><use href="#sBoth" width="8" height="15"/></svg><div class="th" style="left:264px;top:1px;letter-spacing:1.099px;">Wrap-up- time</div><div class="th" style="left:264px;top:14px;letter-spacing:0.541px;">Ag</div>
<svg class="abs" style="left:360px;top:6px" width="8" height="15"><use href="#sBoth" width="8" height="15"/></svg><div class="th" style="left:371px;top:1px;letter-spacing:0.77px;">Avail.</div><div class="th" style="left:371px;top:14px;letter-spacing:0.836px;">Agent</div>
<svg class="abs" style="left:438px;top:6px" width="8" height="15"><use href="#sBoth" width="8" height="15"/></svg><div class="th" style="left:449px;top:1px;letter-spacing:1.024px;">Unav.</div><div class="th" style="left:449px;top:14px;letter-spacing:0.731px;">Agents</div>
<svg class="abs" style="left:522px;top:6px" width="8" height="15"><use href="#sBoth" width="8" height="15"/></svg><div class="th" style="left:533px;top:6px;font-family:'Liberation Serif',serif;font-size:13.5px;letter-spacing:0">Q</div>
<svg class="abs" style="left:547px;top:6px" width="8" height="15"><use href="#sBoth" width="8" height="15"/></svg><div class="th" style="left:558px;top:6px;font-family:'Liberation Serif',serif;font-size:13.5px;letter-spacing:0">QI</div>
</div>
<div class="row o" style="top:26px;width:573px;height:23px"><div class="c s" style="left:0;width:152px"></div><div class="c" style="left:152px;width:421px"></div><svg class="abs" style="left:10.5px;top:6px" width="5" height="10"><use href="#ex" width="5" height="10"/></svg><div class="tx" style="left:22px;top:5.5px;letter-spacing:0.229px;">DIMEX_SIN_GESTION</div><div class="tx g" style="left:158px;top:5.5px;letter-spacing:0.664px;">0</div><div class="tx g" style="left:254px;top:5.5px;letter-spacing:0.664px;">0</div><div class="tx g" style="left:361px;top:5.5px;letter-spacing:0.664px;">0</div><div class="tx g" style="left:439px;top:5.5px;letter-spacing:0.664px;">0</div><div class="tx g" style="left:523px;top:5.5px;letter-spacing:1.203px;">-</div><div class="tx g" style="left:548px;top:5.5px;letter-spacing:1.203px;">-</div></div>
<div class="row e" style="top:50px;width:573px;height:23px"><div class="c s" style="left:0;width:152px"></div><div class="c" style="left:152px;width:421px"></div><svg class="abs" style="left:10.5px;top:6px" width="5" height="10"><use href="#ex" width="5" height="10"/></svg><div class="tx" style="left:22px;top:5.5px;letter-spacing:0.122px;">FINAE _ROTAS</div><div class="tx g" style="left:158px;top:5.5px;letter-spacing:0.664px;">0</div><div class="tx g" style="left:254px;top:5.5px;letter-spacing:0.664px;">0</div><div class="tx g" style="left:361px;top:5.5px;letter-spacing:0.664px;">0</div><div class="tx g" style="left:439px;top:5.5px;letter-spacing:0.664px;">0</div><div class="tx g" style="left:523px;top:5.5px;letter-spacing:0.664px;">0</div><div class="tx g" style="left:548px;top:5.5px;letter-spacing:0.664px;">0</div></div>
<div class="row o" style="top:74px;width:573px;height:23px"><div class="c s" style="left:0;width:152px"></div><div class="c" style="left:152px;width:421px"></div><svg class="abs" style="left:10.5px;top:6px" width="5" height="10"><use href="#ex" width="5" height="10"/></svg><div class="tx" style="left:22px;top:5.5px;letter-spacing:0.015px;">FINAE_CONTACTO</div><div class="tx g" style="left:158px;top:5.5px;letter-spacing:0.664px;">0</div><div class="tx g" style="left:254px;top:5.5px;letter-spacing:0.664px;">0</div><div class="tx g" style="left:361px;top:5.5px;letter-spacing:0.664px;">0</div><div class="tx g" style="left:439px;top:5.5px;letter-spacing:0.664px;">0</div><div class="tx g" style="left:523px;top:5.5px;letter-spacing:1.203px;">-</div><div class="tx g" style="left:548px;top:5.5px;letter-spacing:1.203px;">-</div></div>
<div class="row e" style="top:98px;width:573px;height:23px"><div class="c s" style="left:0;width:152px"></div><div class="c" style="left:152px;width:421px"></div><svg class="abs" style="left:10.5px;top:6px" width="5" height="10"><use href="#ex" width="5" height="10"/></svg><div class="tx" style="left:22px;top:5.5px;letter-spacing:0.046px;">FINAE_NO CONTACTO</div><div class="tx g" style="left:158px;top:5.5px;letter-spacing:0.664px;">0</div><div class="tx g" style="left:254px;top:5.5px;letter-spacing:0.664px;">0</div><div class="tx g" style="left:361px;top:5.5px;letter-spacing:0.664px;">0</div><div class="tx g" style="left:439px;top:5.5px;letter-spacing:0.664px;">0</div><div class="tx g" style="left:523px;top:5.5px;letter-spacing:1.203px;">-</div><div class="tx g" style="left:548px;top:5.5px;letter-spacing:1.203px;">-</div></div>
<div class="row o" style="top:122px;width:573px;height:23px"><div class="c s" style="left:0;width:152px"></div><div class="c" style="left:152px;width:421px"></div><svg class="abs" style="left:10.5px;top:6px" width="5" height="10"><use href="#ex" width="5" height="10"/></svg><div class="tx" style="left:22px;top:5.5px;letter-spacing:-0.034px;">UTEL_NO CONTACTO</div><div class="tx g" style="left:158px;top:5.5px;letter-spacing:0.664px;">0</div><div class="tx g" style="left:254px;top:5.5px;letter-spacing:0.664px;">0</div><div class="tx g" style="left:361px;top:5.5px;letter-spacing:0.664px;">0</div><div class="tx g" style="left:439px;top:5.5px;letter-spacing:0.664px;">0</div><div class="tx g" style="left:523px;top:5.5px;letter-spacing:0.664px;">0</div><div class="tx g" style="left:548px;top:5.5px;letter-spacing:0.664px;">0</div></div>
<div class="row e" style="top:146px;width:573px;height:23px"><div class="c s" style="left:0;width:152px"></div><div class="c" style="left:152px;width:421px"></div><svg class="abs" style="left:10.5px;top:6px" width="5" height="10"><use href="#ex" width="5" height="10"/></svg><div class="tx" style="left:22px;top:5.5px;letter-spacing:-0.059px;">UTEL_ROTAS</div><div class="tx g" style="left:158px;top:5.5px;letter-spacing:0.664px;">0</div><div class="tx g" style="left:254px;top:5.5px;letter-spacing:0.664px;">0</div><div class="tx g" style="left:361px;top:5.5px;letter-spacing:0.664px;">0</div><div class="tx g" style="left:439px;top:5.5px;letter-spacing:0.664px;">0</div><div class="tx g" style="left:523px;top:5.5px;letter-spacing:0.664px;">0</div><div class="tx g" style="left:548px;top:5.5px;letter-spacing:0.664px;">0</div></div>
<div class="row o" style="top:170px;width:573px;height:23px"><div class="c s" style="left:0;width:152px"></div><div class="c" style="left:152px;width:421px"></div><svg class="abs" style="left:10.5px;top:6px" width="5" height="10"><use href="#ex" width="5" height="10"/></svg><div class="tx" style="left:22px;top:5.5px;letter-spacing:-0.017px;">BANCO AZTECA</div><div class="tx g" style="left:158px;top:5.5px;letter-spacing:0.664px;">0</div><div class="tx g" style="left:254px;top:5.5px;letter-spacing:0.664px;">0</div><div class="tx g" style="left:361px;top:5.5px;letter-spacing:0.664px;">0</div><div class="tx g" style="left:439px;top:5.5px;letter-spacing:0.664px;">0</div><div class="tx g" style="left:523px;top:5.5px;letter-spacing:0.664px;">0</div><div class="tx g" style="left:548px;top:5.5px;letter-spacing:0.664px;">0</div></div>
<div class="row e" style="top:194px;width:573px;height:23px"><div class="c s" style="left:0;width:152px"></div><div class="c" style="left:152px;width:421px"></div><svg class="abs" style="left:10.5px;top:6px" width="5" height="10"><use href="#ex" width="5" height="10"/></svg><div class="tx" style="left:22px;top:5.5px;letter-spacing:-0.262px;">BANCOMER</div><div class="tx g" style="left:158px;top:5.5px;letter-spacing:0.664px;">0</div><div class="tx g" style="left:254px;top:5.5px;letter-spacing:0.664px;">0</div><div class="tx g" style="left:361px;top:5.5px;letter-spacing:0.664px;">0</div><div class="tx g" style="left:439px;top:5.5px;letter-spacing:0.664px;">0</div><div class="tx g" style="left:523px;top:5.5px;letter-spacing:0.664px;">0</div><div class="tx g" style="left:548px;top:5.5px;letter-spacing:0.664px;">0</div></div>
<div class="row o" style="top:218px;width:573px;height:23px"><div class="c s" style="left:0;width:152px"></div><div class="c" style="left:152px;width:421px"></div><svg class="abs" style="left:10.5px;top:6px" width="5" height="10"><use href="#ex" width="5" height="10"/></svg><div class="tx" style="left:22px;top:5.5px;letter-spacing:0.035px;">BANORTE NOMINA</div><div class="tx" style="left:158px;top:5.5px;letter-spacing:0.664px;">4</div><div class="tx" style="left:254px;top:5.5px;letter-spacing:0.664px;">3</div><div class="tx" style="left:361px;top:5.5px;letter-spacing:0.664px;">2</div><div class="tx g" style="left:439px;top:5.5px;letter-spacing:0.664px;">0</div><div class="tx g" style="left:523px;top:5.5px;letter-spacing:0.664px;">0</div><div class="tx g" style="left:548px;top:5.5px;letter-spacing:0.664px;">0</div></div>
<div class="row e" style="top:242px;width:573px;height:23px"><div class="c s" style="left:0;width:152px"></div><div class="c" style="left:152px;width:421px"></div><svg class="abs" style="left:10.5px;top:6px" width="5" height="10"><use href="#ex" width="5" height="10"/></svg><div class="tx" style="left:22px;top:5.5px;letter-spacing:-0.075px;">BANORTE TDC</div><div class="tx" style="left:158px;top:5.5px;letter-spacing:0.664px;">2</div><div class="tx" style="left:254px;top:5.5px;letter-spacing:0.664px;">1</div><div class="tx" style="left:361px;top:5.5px;letter-spacing:0.664px;">2</div><div class="tx" style="left:439px;top:5.5px;letter-spacing:0.664px;">8</div><div class="tx g" style="left:523px;top:5.5px;letter-spacing:0.664px;">0</div><div class="tx g" style="left:548px;top:5.5px;letter-spacing:0.664px;">0</div></div>
<div class="row o" style="top:266px;width:573px;height:23px"><div class="c s" style="left:0;width:152px"></div><div class="c" style="left:152px;width:421px"></div><svg class="abs" style="left:10.5px;top:6px" width="5" height="10"><use href="#ex" width="5" height="10"/></svg><div class="tx" style="left:22px;top:5.5px;letter-spacing:0.534px;">Banorte2</div><div class="tx g" style="left:158px;top:5.5px;letter-spacing:0.664px;">0</div><div class="tx g" style="left:254px;top:5.5px;letter-spacing:0.664px;">0</div><div class="tx g" style="left:361px;top:5.5px;letter-spacing:0.664px;">0</div><div class="tx g" style="left:439px;top:5.5px;letter-spacing:0.664px;">0</div><div class="tx g" style="left:523px;top:5.5px;letter-spacing:1.203px;">-</div><div class="tx g" style="left:548px;top:5.5px;letter-spacing:1.203px;">-</div></div>
<div class="row e" style="top:290px;width:573px;height:23px"><div class="c s" style="left:0;width:152px"></div><div class="c" style="left:152px;width:421px"></div><svg class="abs" style="left:10.5px;top:6px" width="5" height="10"><use href="#ex" width="5" height="10"/></svg><div class="tx" style="left:22px;top:5.5px;letter-spacing:0.55px;">Banorte40</div><div class="tx g" style="left:158px;top:5.5px;letter-spacing:0.664px;">0</div><div class="tx g" style="left:254px;top:5.5px;letter-spacing:0.664px;">0</div><div class="tx g" style="left:361px;top:5.5px;letter-spacing:0.664px;">0</div><div class="tx g" style="left:439px;top:5.5px;letter-spacing:0.664px;">0</div><div class="tx g" style="left:523px;top:5.5px;letter-spacing:0.664px;">0</div><div class="tx g" style="left:548px;top:5.5px;letter-spacing:0.664px;">0</div></div>
<div class="row o" style="top:314px;width:573px;height:23px"><div class="c s" style="left:0;width:152px"></div><div class="c" style="left:152px;width:421px"></div><svg class="abs" style="left:10.5px;top:6px" width="5" height="10"><use href="#ex" width="5" height="10"/></svg><div class="tx" style="left:22px;top:5.5px;letter-spacing:-0.238px;">BAYPORT</div><div class="tx g" style="left:158px;top:5.5px;letter-spacing:0.664px;">0</div><div class="tx g" style="left:254px;top:5.5px;letter-spacing:0.664px;">0</div><div class="tx g" style="left:361px;top:5.5px;letter-spacing:0.664px;">0</div><div class="tx g" style="left:439px;top:5.5px;letter-spacing:0.664px;">0</div><div class="tx g" style="left:523px;top:5.5px;letter-spacing:0.664px;">0</div><div class="tx g" style="left:548px;top:5.5px;letter-spacing:0.664px;">0</div></div>
<div class="row e" style="top:338px;width:573px;height:23px"><div class="c s" style="left:0;width:152px"></div><div class="c" style="left:152px;width:421px"></div><svg class="abs" style="left:10.5px;top:6px" width="5" height="10"><use href="#ex" width="5" height="10"/></svg><div class="tx" style="left:22px;top:5.5px;letter-spacing:-0.285px;">CABLECOM</div><div class="tx g" style="left:158px;top:5.5px;letter-spacing:0.664px;">0</div><div class="tx g" style="left:254px;top:5.5px;letter-spacing:0.664px;">0</div><div class="tx g" style="left:361px;top:5.5px;letter-spacing:0.664px;">0</div><div class="tx g" style="left:439px;top:5.5px;letter-spacing:0.664px;">0</div><div class="tx g" style="left:523px;top:5.5px;letter-spacing:0.664px;">0</div><div class="tx g" style="left:548px;top:5.5px;letter-spacing:0.664px;">0</div></div>
<div class="row o" style="top:362px;width:573px;height:23px"><div class="c s" style="left:0;width:152px"></div><div class="c" style="left:152px;width:421px"></div><svg class="abs" style="left:10.5px;top:6px" width="5" height="10"><use href="#ex" width="5" height="10"/></svg><div class="tx" style="left:22px;top:5.5px;letter-spacing:0.407px;">Cobranza4-B</div><div class="tx g" style="left:158px;top:5.5px;letter-spacing:0.664px;">0</div><div class="tx g" style="left:254px;top:5.5px;letter-spacing:0.664px;">0</div><div class="tx g" style="left:361px;top:5.5px;letter-spacing:0.664px;">0</div><div class="tx g" style="left:439px;top:5.5px;letter-spacing:0.664px;">0</div><div class="tx g" style="left:523px;top:5.5px;letter-spacing:0.664px;">0</div><div class="tx g" style="left:548px;top:5.5px;letter-spacing:0.664px;">0</div></div>
<div class="row e" style="top:386px;width:573px;height:23px"><div class="c s" style="left:0;width:152px"></div><div class="c" style="left:152px;width:421px"></div><svg class="abs" style="left:10.5px;top:6px" width="5" height="10"><use href="#ex" width="5" height="10"/></svg><div class="tx" style="left:22px;top:5.5px;letter-spacing:-0.008px;">COBRANZA7</div><div class="tx" style="left:158px;top:5.5px;letter-spacing:0.664px;">2</div><div class="tx g" style="left:254px;top:5.5px;letter-spacing:0.664px;">0</div><div class="tx g" style="left:361px;top:5.5px;letter-spacing:0.664px;">0</div><div class="tx" style="left:439px;top:5.5px;letter-spacing:0.664px;">8</div><div class="tx" style="left:523px;top:5.5px;letter-spacing:0.664px;">9</div><div class="tx" style="left:548px;top:5.5px;letter-spacing:0.664px;">9</div></div>
<div class="row o" style="top:410px;width:573px;height:23px"><div class="c s" style="left:0;width:152px"></div><div class="c" style="left:152px;width:421px"></div><svg class="abs" style="left:10.5px;top:6px" width="5" height="10"><use href="#ex" width="5" height="10"/></svg><div class="tx" style="left:22px;top:5.5px;letter-spacing:-0.156px;">DEMO_COPERVA</div><div class="tx g" style="left:158px;top:5.5px;letter-spacing:0.664px;">0</div><div class="tx g" style="left:254px;top:5.5px;letter-spacing:0.664px;">0</div><div class="tx g" style="left:361px;top:5.5px;letter-spacing:0.664px;">0</div><div class="tx g" style="left:439px;top:5.5px;letter-spacing:0.664px;">0</div><div class="tx g" style="left:523px;top:5.5px;letter-spacing:1.203px;">-</div><div class="tx g" style="left:548px;top:5.5px;letter-spacing:1.203px;">-</div></div>
<div class="row e" style="top:434px;width:573px;height:23px"><div class="c s" style="left:0;width:152px"></div><div class="c" style="left:152px;width:421px"></div><svg class="abs" style="left:10.5px;top:6px" width="5" height="10"><use href="#ex" width="5" height="10"/></svg><div class="tx" style="left:22px;top:5.5px;letter-spacing:0.181px;">DIMEX</div><div class="tx g" style="left:158px;top:5.5px;letter-spacing:0.664px;">0</div><div class="tx g" style="left:254px;top:5.5px;letter-spacing:0.664px;">0</div><div class="tx g" style="left:361px;top:5.5px;letter-spacing:0.664px;">0</div><div class="tx g" style="left:439px;top:5.5px;letter-spacing:0.664px;">0</div><div class="tx g" style="left:523px;top:5.5px;letter-spacing:0.664px;">0</div><div class="tx g" style="left:548px;top:5.5px;letter-spacing:0.664px;">0</div></div>
<div class="row o" style="top:458px;width:573px;height:23px"><div class="c s" style="left:0;width:152px"></div><div class="c" style="left:152px;width:421px"></div><svg class="abs" style="left:10.5px;top:6px" width="5" height="10"><use href="#ex" width="5" height="10"/></svg><div class="tx" style="left:22px;top:5.5px;letter-spacing:0.218px;">FINAE _SIN_GESTION</div><div class="tx g" style="left:158px;top:5.5px;letter-spacing:0.664px;">0</div><div class="tx g" style="left:254px;top:5.5px;letter-spacing:0.664px;">0</div><div class="tx g" style="left:361px;top:5.5px;letter-spacing:0.664px;">0</div><div class="tx g" style="left:439px;top:5.5px;letter-spacing:0.664px;">0</div><div class="tx g" style="left:523px;top:5.5px;letter-spacing:0.664px;">0</div><div class="tx g" style="left:548px;top:5.5px;letter-spacing:0.664px;">0</div></div>
<div class="row e" style="top:482px;width:573px;height:23px"><div class="c s" style="left:0;width:152px"></div><div class="c" style="left:152px;width:421px"></div><svg class="abs" style="left:10.5px;top:6px" width="5" height="10"><use href="#ex" width="5" height="10"/></svg><div class="tx" style="left:22px;top:5.5px;letter-spacing:0.05px;">FINANCIERAS</div><div class="tx g" style="left:158px;top:5.5px;letter-spacing:0.664px;">0</div><div class="tx g" style="left:254px;top:5.5px;letter-spacing:0.664px;">0</div><div class="tx g" style="left:361px;top:5.5px;letter-spacing:0.664px;">0</div><div class="tx g" style="left:439px;top:5.5px;letter-spacing:0.664px;">0</div><div class="tx g" style="left:523px;top:5.5px;letter-spacing:1.203px;">-</div><div class="tx g" style="left:548px;top:5.5px;letter-spacing:1.203px;">-</div></div>
<div class="row o" style="top:506px;width:573px;height:23px"><div class="c s" style="left:0;width:152px"></div><div class="c" style="left:152px;width:421px"></div><svg class="abs" style="left:10.5px;top:6px" width="5" height="10"><use href="#ex" width="5" height="10"/></svg><div class="tx" style="left:22px;top:5.5px;letter-spacing:-0.063px;">FOME AUTOS</div><div class="tx g" style="left:158px;top:5.5px;letter-spacing:0.664px;">0</div><div class="tx g" style="left:254px;top:5.5px;letter-spacing:0.664px;">0</div><div class="tx g" style="left:361px;top:5.5px;letter-spacing:0.664px;">0</div><div class="tx g" style="left:439px;top:5.5px;letter-spacing:0.664px;">0</div><div class="tx g" style="left:523px;top:5.5px;letter-spacing:0.664px;">0</div><div class="tx g" style="left:548px;top:5.5px;letter-spacing:0.664px;">0</div></div>
<div class="row e" style="top:530px;width:573px;height:23px"><div class="c s" style="left:0;width:152px"></div><div class="c" style="left:152px;width:421px"></div><svg class="abs" style="left:10.5px;top:6px" width="5" height="10"><use href="#ex" width="5" height="10"/></svg><div class="tx" style="left:22px;top:5.5px;letter-spacing:-0.316px;">FORJADORES</div><div class="tx g" style="left:158px;top:5.5px;letter-spacing:0.664px;">0</div><div class="tx g" style="left:254px;top:5.5px;letter-spacing:0.664px;">0</div><div class="tx g" style="left:361px;top:5.5px;letter-spacing:0.664px;">0</div><div class="tx g" style="left:439px;top:5.5px;letter-spacing:0.664px;">0</div><div class="tx g" style="left:523px;top:5.5px;letter-spacing:1.203px;">-</div><div class="tx g" style="left:548px;top:5.5px;letter-spacing:1.203px;">-</div></div>
<div class="row o" style="top:554px;width:573px;height:23px"><div class="c s" style="left:0;width:152px"></div><div class="c" style="left:152px;width:421px"></div><svg class="abs" style="left:10.5px;top:6px" width="5" height="10"><use href="#ex" width="5" height="10"/></svg><div class="tx" style="left:22px;top:5.5px;letter-spacing:0.596px;">icr_test</div><div class="tx g" style="left:158px;top:5.5px;letter-spacing:0.664px;">0</div><div class="tx g" style="left:254px;top:5.5px;letter-spacing:0.664px;">0</div><div class="tx g" style="left:361px;top:5.5px;letter-spacing:0.664px;">0</div><div class="tx g" style="left:439px;top:5.5px;letter-spacing:0.664px;">0</div><div class="tx g" style="left:523px;top:5.5px;letter-spacing:0.664px;">0</div><div class="tx g" style="left:548px;top:5.5px;letter-spacing:0.664px;">0</div></div>
<div class="row e" style="top:578px;width:573px;height:23px"><div class="c s" style="left:0;width:152px"></div><div class="c" style="left:152px;width:421px"></div><svg class="abs" style="left:10.5px;top:6px" width="5" height="10"><use href="#ex" width="5" height="10"/></svg><div class="tx" style="left:22px;top:5.5px;letter-spacing:0.47px;">IZZI NEGOCIOS 1-30</div><div class="tx" style="left:158px;top:5.5px;letter-spacing:0.664px;">2</div><div class="tx g" style="left:254px;top:5.5px;letter-spacing:0.664px;">0</div><div class="tx g" style="left:361px;top:5.5px;letter-spacing:0.664px;">0</div><div class="tx g" style="left:439px;top:5.5px;letter-spacing:0.664px;">0</div><div class="tx g" style="left:523px;top:5.5px;letter-spacing:0.664px;">0</div><div class="tx g" style="left:548px;top:5.5px;letter-spacing:0.664px;">0</div></div>
<div class="row o" style="top:602px;width:573px;height:23px"><div class="c s" style="left:0;width:152px"></div><div class="c" style="left:152px;width:421px"></div><svg class="abs" style="left:10.5px;top:6px" width="5" height="10"><use href="#ex" width="5" height="10"/></svg><div class="tx" style="left:22px;top:5.5px;letter-spacing:0.481px;">IZZI NEGOCIOS 31-90</div><div class="tx g" style="left:158px;top:5.5px;letter-spacing:0.664px;">0</div><div class="tx g" style="left:254px;top:5.5px;letter-spacing:0.664px;">0</div><div class="tx g" style="left:361px;top:5.5px;letter-spacing:0.664px;">0</div><div class="tx g" style="left:439px;top:5.5px;letter-spacing:0.664px;">0</div><div class="tx g" style="left:523px;top:5.5px;letter-spacing:0.664px;">0</div><div class="tx g" style="left:548px;top:5.5px;letter-spacing:0.664px;">0</div></div>
<div class="row e" style="top:626px;width:573px;height:23px"><div class="c s" style="left:0;width:152px"></div><div class="c" style="left:152px;width:421px"></div><svg class="abs" style="left:10.5px;top:6px" width="5" height="10"><use href="#ex" width="5" height="10"/></svg><div class="tx" style="left:22px;top:5.5px;letter-spacing:0.138px;">IZZI_COP_ESPECIAL</div><div class="tx" style="left:158px;top:5.5px;letter-spacing:0.664px;">1</div><div class="tx g" style="left:254px;top:5.5px;letter-spacing:0.664px;">0</div><div class="tx g" style="left:361px;top:5.5px;letter-spacing:0.664px;">0</div><div class="tx g" style="left:439px;top:5.5px;letter-spacing:0.664px;">0</div><div class="tx g" style="left:523px;top:5.5px;letter-spacing:0.664px;">0</div><div class="tx g" style="left:548px;top:5.5px;letter-spacing:0.664px;">0</div></div>
<div class="row o" style="top:650px;width:573px;height:23px"><div class="c s" style="left:0;width:152px"></div><div class="c" style="left:152px;width:421px"></div><svg class="abs" style="left:10.5px;top:6px" width="5" height="10"><use href="#ex" width="5" height="10"/></svg><div class="tx" style="left:22px;top:5.5px;letter-spacing:0.899px;">IZZI_IN</div><div class="tx" style="left:158px;top:5.5px;letter-spacing:0.672px;">14</div><div class="tx" style="left:254px;top:5.5px;letter-spacing:0.664px;">3</div><div class="tx g" style="left:361px;top:5.5px;letter-spacing:0.664px;">0</div><div class="tx" style="left:439px;top:5.5px;letter-spacing:0.664px;">1</div><div class="tx" style="left:523px;top:5.5px;letter-spacing:0.664px;">5</div><div class="tx" style="left:548px;top:5.5px;letter-spacing:0.664px;">5</div></div>
<div class="row e" style="top:674px;width:573px;height:23px"><div class="c s" style="left:0;width:152px"></div><div class="c" style="left:152px;width:421px"></div><svg class="abs" style="left:10.5px;top:6px" width="5" height="10"><use href="#ex" width="5" height="10"/></svg><div class="tx" style="left:22px;top:5.5px;letter-spacing:0.445px;">IZZI_PACIFICO</div><div class="tx g" style="left:158px;top:5.5px;letter-spacing:0.664px;">0</div><div class="tx g" style="left:254px;top:5.5px;letter-spacing:0.664px;">0</div><div class="tx" style="left:361px;top:5.5px;letter-spacing:0.664px;">1</div><div class="tx g" style="left:439px;top:5.5px;letter-spacing:0.664px;">0</div><div class="tx g" style="left:523px;top:5.5px;letter-spacing:0.664px;">0</div><div class="tx g" style="left:548px;top:5.5px;letter-spacing:0.664px;">0</div></div>
<div class="row o" style="top:698px;width:573px;height:23px"><div class="c s" style="left:0;width:152px"></div><div class="c" style="left:152px;width:421px"></div><svg class="abs" style="left:10.5px;top:6px" width="5" height="10"><use href="#ex" width="5" height="10"/></svg><div class="tx" style="left:22px;top:5.5px;letter-spacing:0.264px;">IZZI_RETENCION</div><div class="tx g" style="left:158px;top:5.5px;letter-spacing:0.664px;">0</div><div class="tx g" style="left:254px;top:5.5px;letter-spacing:0.664px;">0</div><div class="tx g" style="left:361px;top:5.5px;letter-spacing:0.664px;">0</div><div class="tx g" style="left:439px;top:5.5px;letter-spacing:0.664px;">0</div><div class="tx g" style="left:523px;top:5.5px;letter-spacing:0.664px;">0</div><div class="tx g" style="left:548px;top:5.5px;letter-spacing:0.664px;">0</div></div>
</div></div>
<div class="menu" style="left:42px;top:268px;width:123px;height:116px">
<div class="mi" style="top:1px;width:121px"><svg class="abs" style="left:6px;top:2px" width="12" height="16" fill="#2a9cc4"><use href="#per" width="12" height="16"/></svg><div class="mt" style="left:24px;top:3px;letter-spacing:0.508px;">Agent</div><svg class="abs" style="left:109px;top:3px" width="6" height="9" fill="#47b1db"><use href="#marr" width="6" height="9"/></svg></div>
<div class="mi hl" style="top:23px;width:121px"><svg class="abs" style="left:4px;top:2px" width="16" height="16"><use href="#tph" width="16" height="16"/></svg><div class="mt" style="left:24px;top:3px;letter-spacing:0.423px;">Extension</div><svg class="abs" style="left:109px;top:3.5px" width="6" height="10" viewBox="0 0 6 10"><path d="M.5 .8 L5.4 5 L.5 9.2 Z" fill="#3d9cf5" stroke="#fff" stroke-width="1"/></svg></div>
<div class="mi" style="top:45px;width:121px"><svg class="abs" style="left:4px;top:2px" width="16" height="16"><use href="#tmon" width="16" height="16"/></svg><div class="mt" style="left:24px;top:3px;letter-spacing:0.34px;">Screen</div><svg class="abs" style="left:109px;top:3px" width="6" height="9" fill="#47b1db"><use href="#marr" width="6" height="9"/></svg></div>
<div class="mi dis" style="top:67px;width:121px"><svg class="abs" style="left:5px;top:1.5px" width="14" height="16"><use href="#doc" width="14" height="16"/></svg><div class="mt" style="left:24px;top:3px;letter-spacing:0.587px;">Voice Tr.</div><svg class="abs" style="left:109px;top:3px" width="6" height="9" fill="#b5d9ea"><use href="#marr" width="6" height="9"/></svg></div>
<div class="mi dis" style="top:89px;width:121px"><svg class="abs" style="left:5px;top:1.5px" width="14" height="16"><use href="#doc" width="14" height="16"/></svg><div class="mt" style="left:24px;top:3px;letter-spacing:0.624px;">Med. Tr.</div><svg class="abs" style="left:109px;top:3px" width="6" height="9" fill="#b5d9ea"><use href="#marr" width="6" height="9"/></svg></div>
</div>
<div class="menu" style="left:164px;top:291px;width:187px;height:128px">
<div class="mt" style="left:30px;top:4px;letter-spacing:0.423px;">Extension</div>
<div class="abs" style="left:25px;top:16px;width:129px;height:15px;border:1px solid #9aa0a8;background:#fff"><div class="mt" style="left:1px;top:0.5px;letter-spacing:0.675px;">410</div></div>
<div class="sep" style="top:35px;width:185px"></div>
<svg class="abs" style="left:7px;top:38px" width="12" height="16" fill="#e88a0c"><use href="#per" width="12" height="16"/></svg>
<div class="mt" style="left:25px;top:39px;letter-spacing:0.187px;">Call</div>
<div class="sep" style="top:60px;width:185px"></div>
<svg class="abs" style="left:5px;top:68px" width="8" height="10" fill="#000"><use href="#spy1" width="8" height="10"/></svg><svg class="abs" style="left:13px;top:64px" width="8" height="10" fill="#000"><use href="#spy1" width="8" height="10"/></svg><div class="mt" style="left:25px;top:64px;letter-spacing:0.439px;">Spy</div>
<svg class="abs" style="left:5px;top:90px" width="8" height="10" fill="#e88a0c"><use href="#psm" width="8" height="10"/></svg><svg class="abs" style="left:13px;top:86px" width="8" height="10" fill="#000"><use href="#spy1" width="8" height="10"/></svg><div class="mt" style="left:25px;top:86px;letter-spacing:0.433px;">Whisper</div>
<svg class="abs" style="left:5px;top:112px" width="8" height="10" fill="#e88a0c"><use href="#psm" width="8" height="10"/></svg><svg class="abs" style="left:13px;top:108px" width="8" height="10" fill="#e88a0c"><use href="#psm" width="8" height="10"/></svg><div class="mt" style="left:25px;top:108px;letter-spacing:0.353px;">Conference</div>
</div>
</body></html>
